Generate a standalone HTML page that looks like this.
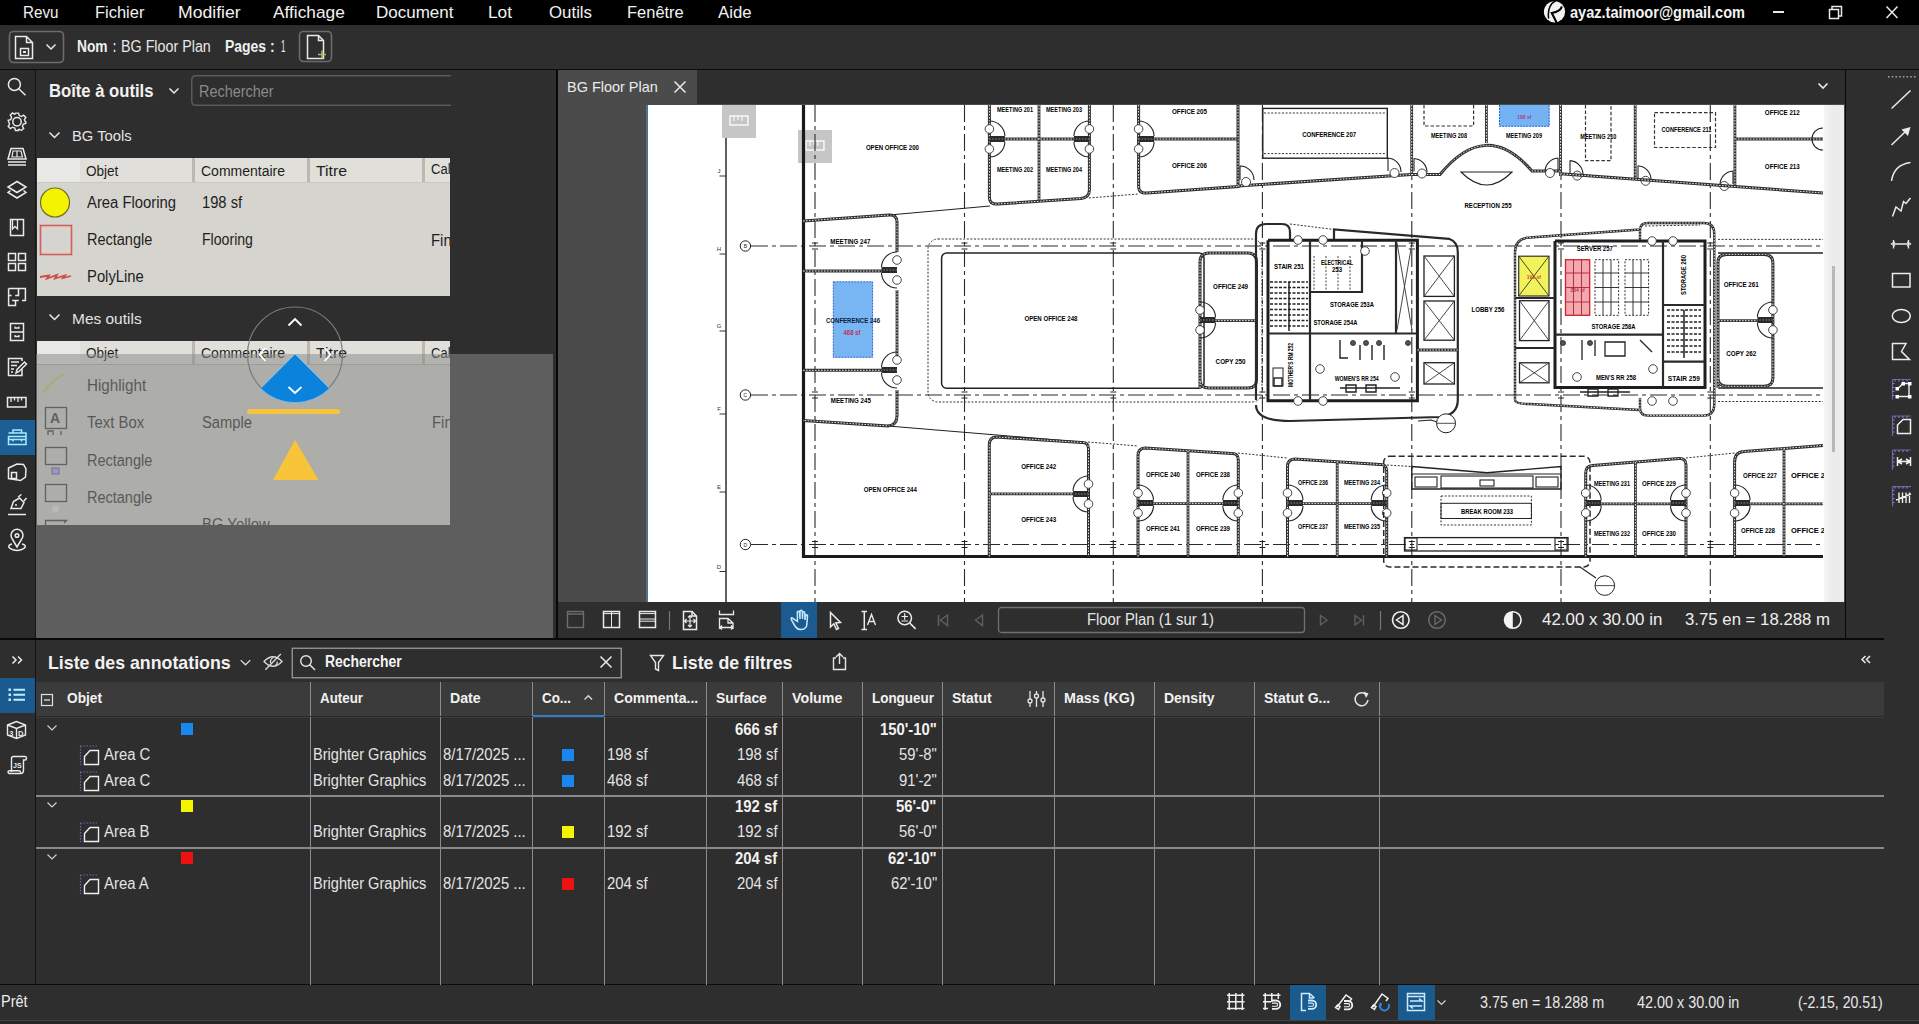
<!DOCTYPE html><html><head><meta charset="utf-8"><style>
html,body{margin:0;padding:0;width:1919px;height:1024px;overflow:hidden;background:#2e2e2e;font-family:"Liberation Sans",sans-serif;}
body>div,body>svg{position:absolute;}
svg text{font-family:"Liberation Sans",sans-serif;}
</style></head><body>
<div style="left:0px;top:0px;width:1919px;height:25px;background:#000;"></div>
<div style="left:0px;top:25px;width:1919px;height:44px;background:#2e2e2e;"></div>
<div style="left:0px;top:69px;width:1919px;height:1px;background:#0b0b0b;"></div>
<div style="left:0px;top:70px;width:35px;height:568px;background:#2b2b2b;"></div>
<div style="left:35px;top:70px;width:1px;height:568px;background:#161616;"></div>
<div style="left:36px;top:70px;width:520px;height:568px;background:#2e2e2e;"></div>
<div style="left:556px;top:70px;width:2px;height:570px;background:#080808;"></div>
<div style="left:558px;top:70px;width:1287px;height:34px;background:#2e2e2e;"></div>
<div style="left:558px;top:70px;width:139px;height:35px;background:#4b4b4b;"></div>
<div style="left:558px;top:104px;width:1287px;height:498px;background:#4b4b4b;"></div>
<div style="left:646px;top:105px;width:2px;height:497px;background:#52728c;"></div>
<div style="left:648px;top:105px;width:1176px;height:497px;background:#ffffff;"></div>
<div style="left:1824px;top:105px;width:20px;height:497px;background:linear-gradient(90deg,#f6f6f6,#ececec 40%,#ececec);"></div>
<div style="left:1845px;top:70px;width:1px;height:570px;background:#080808;"></div>
<div style="left:558px;top:602px;width:1287px;height:36px;background:#2e2e2e;"></div>
<div style="left:1846px;top:70px;width:73px;height:915px;background:#2e2e2e;"></div>
<div style="left:0px;top:640px;width:1884px;height:345px;background:#2e2e2e;"></div>
<div style="left:0px;top:638px;width:1884px;height:2px;background:#080808;"></div>
<div style="left:35px;top:640px;width:1px;height:345px;background:#141414;"></div>
<div style="left:0px;top:984px;width:1919px;height:1px;background:#0b0b0b;"></div>
<div style="left:0px;top:985px;width:1919px;height:35px;background:#2e2e2e;"></div>
<div style="left:0px;top:1020px;width:1919px;height:1px;background:#444;"></div>
<div style="left:0px;top:1021px;width:1919px;height:3px;background:#262626;"></div>
<div style="left:23.30px;top:4px;font-size:17px;line-height:17px;color:#f2f2f2;white-space:nowrap;transform:scaleX(0.8931);transform-origin:0 0;">Revu</div>
<div style="left:95.40px;top:4px;font-size:17px;line-height:17px;color:#f2f2f2;white-space:nowrap;transform:scaleX(0.9686);transform-origin:0 0;">Fichier</div>
<div style="left:178.00px;top:4px;font-size:17px;line-height:17px;color:#f2f2f2;white-space:nowrap;transform:scaleX(1.0358);transform-origin:0 0;">Modifier</div>
<div style="left:273.00px;top:4px;font-size:17px;line-height:17px;color:#f2f2f2;white-space:nowrap;transform:scaleX(1.0177);transform-origin:0 0;">Affichage</div>
<div style="left:376.00px;top:4px;font-size:17px;line-height:17px;color:#f2f2f2;white-space:nowrap;">Document</div>
<div style="left:488.30px;top:4px;font-size:17px;line-height:17px;color:#f2f2f2;white-space:nowrap;transform:scaleX(1.0157);transform-origin:0 0;">Lot</div>
<div style="left:549.00px;top:4px;font-size:17px;line-height:17px;color:#f2f2f2;white-space:nowrap;transform:scaleX(0.9900);transform-origin:0 0;">Outils</div>
<div style="left:627.00px;top:4px;font-size:17px;line-height:17px;color:#f2f2f2;white-space:nowrap;transform:scaleX(0.9690);transform-origin:0 0;">Fenêtre</div>
<div style="left:718.00px;top:4px;font-size:17px;line-height:17px;color:#f2f2f2;white-space:nowrap;transform:scaleX(0.9853);transform-origin:0 0;">Aide</div>
<div style="left:1569.90px;top:4px;font-size:17px;line-height:17px;font-weight:bold;color:#f4f4f4;white-space:nowrap;transform:scaleX(0.8553);transform-origin:0 0;">ayaz.taimoor@gmail.com</div>
<svg style="left:1540px;top:0px;" width="30" height="25" viewBox="0 0 30 25"><circle cx="14.5" cy="11.8" r="10.6" fill="#f2f2f2"/><path d="M15.8 0.5 C10.5 3.5 7.5 10 8.6 18.5" stroke="#000" stroke-width="1.5" fill="none"/><path d="M21.8 6.5 C21 10.5 16 12.3 11.8 13 L16.8 23" stroke="#000" stroke-width="2.1" fill="none"/></svg>
<div style="left:1773px;top:11px;width:11px;height:1.5px;background:#eaeaea;"></div>
<svg style="left:1826px;top:4px;" width="20" height="18" viewBox="0 0 20 18"><rect x="3.5" y="5.5" width="9" height="9" stroke="#eaeaea" stroke-width="1.5" fill="none"/><path d="M6 5.5 V2.5 H15.5 V12 H12.5" stroke="#eaeaea" stroke-width="1.5" fill="none"/></svg>
<svg style="left:1884px;top:3px;" width="16" height="18" viewBox="0 0 16 18"><path d="M2.5 3.5 L13.5 15 M13.5 3.5 L2.5 15" stroke="#eaeaea" stroke-width="1.5" fill="none"/></svg>
<svg style="left:8px;top:30px;" width="58" height="34" viewBox="0 0 58 34"><rect x="1.5" y="1.5" width="54" height="31" rx="4" stroke="#6c6c6c" stroke-width="1.6" fill="none"/><path d="M7.5 6.5 H18.5 L24.5 12.5 V28.5 H7.5 Z M18.5 6.5 V12.5 H24.5" stroke="#eaeaea" stroke-width="1.5" fill="none"/><rect x="12.5" y="18.5" width="8" height="7" stroke="#eaeaea" stroke-width="1.5" fill="none"/><rect x="15" y="21" width="3" height="2" fill="#eaeaea"/><path d="M38.5 14.5 L43 19 L47.5 14.5" stroke="#eaeaea" stroke-width="1.5" fill="none"/></svg>
<div style="left:76.80px;top:39px;font-size:16px;line-height:16px;font-weight:bold;color:#f0f0f0;white-space:nowrap;transform:scaleX(0.8615);transform-origin:0 0;">Nom</div>
<div style="left:112.50px;top:39px;font-size:16px;line-height:16px;font-weight:bold;color:#f0f0f0;white-space:nowrap;transform:scaleX(0.5597);transform-origin:0 0;">:</div>
<div style="left:120.50px;top:39px;font-size:16px;line-height:16px;color:#e8e8e8;white-space:nowrap;transform:scaleX(0.8937);transform-origin:0 0;">BG Floor Plan</div>
<div style="left:224.90px;top:39px;font-size:16px;line-height:16px;font-weight:bold;color:#f0f0f0;white-space:nowrap;transform:scaleX(0.8720);transform-origin:0 0;">Pages :</div>
<div style="left:281.00px;top:39px;font-size:16px;line-height:16px;color:#e8e8e8;white-space:nowrap;transform:scaleX(0.4955);transform-origin:0 0;">1</div>
<svg style="left:298px;top:30px;" width="35" height="34" viewBox="0 0 35 34"><rect x="1.5" y="1.5" width="32" height="30" rx="4" stroke="#6c6c6c" stroke-width="1.6" fill="none"/><path d="M9.5 5.5 H20.5 L25.5 10.5 V28.5 H9.5 Z M20.5 5.5 V10.5 H25.5" stroke="#eaeaea" stroke-width="1.5" fill="none"/><path d="M20 24.5 H28 M24 20.5 V28.5" stroke="#a8c060" stroke-width="1.5"/></svg>
<svg style="left:0px;top:70px;" width="35" height="500" viewBox="0 0 35 500"><circle cx="14.4" cy="14.4" r="6" stroke="#eaeaea" stroke-width="1.5" fill="none"/><path d="M18.8 18.8 L25.5 25.3" stroke="#eaeaea" stroke-width="1.5" fill="none"/><g transform="translate(17,51.8)"><circle r="4.2" stroke="#eaeaea" stroke-width="1.5" fill="none"/><path d="M-1.6 -8.7 L1.6 -8.7 L2.2 -6.2 L4.4 -5.3 L6.6 -6.6 L8.8 -4.4 L7.4 -2.2 L8.2 -0.1 L8.8 0 L8.8 1.6 L6.3 2.2 L5.4 4.3 L6.7 6.5 L4.5 8.7 L2.2 7.4 L1.6 7.6 L1.6 8.7 L-1.6 8.7 L-2.2 6.3 L-4.4 5.4 L-6.6 6.7 L-8.8 4.5 L-7.4 2.3 L-8.3 0.1 L-8.8 -1.6 L-6.3 -2.2 L-5.4 -4.4 L-6.7 -6.6 L-4.5 -8.8 L-2.3 -7.5 Z" stroke="#eaeaea" stroke-width="1.4" fill="none"/></g><path d="M11 78.5 H23 L26 89 H8 Z" stroke="#eaeaea" stroke-width="1.5" fill="none"/><path d="M13 81 H17 V87 H12 Z M17 81 H21 L22.5 87 H17" stroke="#eaeaea" stroke-width="1.2" fill="none"/><path d="M8 92 H26 M8 95 H26" stroke="#eaeaea" stroke-width="1.5" fill="none"/><path d="M17 111.5 L26 117 L17 122.5 L8 117 Z" stroke="#eaeaea" stroke-width="1.5" fill="none"/><path d="M10.5 120.5 L8 122.5 L17 128 L26 122.5 L23.5 120.5" stroke="#eaeaea" stroke-width="1.5" fill="none"/><rect x="10.5" y="149.5" width="13" height="16" stroke="#eaeaea" stroke-width="1.5" fill="none"/><path d="M12.5 149.5 V159 L15 156.5 L17.5 159 V149.5" stroke="#eaeaea" stroke-width="1.3" fill="none"/><rect x="8.5" y="183.5" width="7" height="7" stroke="#eaeaea" stroke-width="1.5" fill="none"/><rect x="18.5" y="183.5" width="7" height="7" stroke="#eaeaea" stroke-width="1.5" fill="none"/><rect x="8.5" y="193.5" width="7" height="7" stroke="#eaeaea" stroke-width="1.5" fill="none"/><rect x="18.5" y="193.5" width="7" height="7" stroke="#eaeaea" stroke-width="1.5" fill="none"/><path d="M8.6 218.6 H25.4 V230.4 H22 M18.7 230.4 H12.1 M15.5 230.4 V235.4 H8.6 V218.6 M18.5 218.6 V225.4 H15.2 M11.6 225.4 H8.6" stroke="#eaeaea" stroke-width="1.5" fill="none"/><rect x="10.5" y="253.5" width="13" height="17" stroke="#eaeaea" stroke-width="1.5" fill="none"/><path d="M10.5 262 H23.5 M15 256.5 V258 H19 V256.5 M15 265 V266.5 H19 V265" stroke="#eaeaea" stroke-width="1.3" fill="none"/><path d="M22 299 V305.5 H8.5 V288.5 H22 V291" stroke="#eaeaea" stroke-width="1.5" fill="none"/><path d="M11 292 H19 M11 295.5 H17 M11 299 H14 M11 302 H13" stroke="#eaeaea" stroke-width="1.3"/><path d="M16 303 L17 299.5 L24.5 292 L26.5 294 L19 301.5 Z" stroke="#eaeaea" stroke-width="1.5" fill="none"/><rect x="7.5" y="327.5" width="18.5" height="9.5" stroke="#eaeaea" stroke-width="1.5" fill="none"/><path d="M11 327.5 V332 M14.5 327.5 V330.5 M18 327.5 V332 M21.5 327.5 V330.5" stroke="#eaeaea" stroke-width="1.3"/></svg>
<div style="left:0px;top:420px;width:35px;height:35px;background:#1c5e96;"></div>
<svg style="left:0px;top:420px;" width="35" height="35" viewBox="0 0 35 35"><path d="M8.5 16.5 H26 V24.5 H8.5 Z M8.5 19.5 H26 M13 13 V10 H21.5 V13 M8.5 13 H26 V16.5" stroke="#a6ecff" stroke-width="1.5" fill="none"/><path d="M13 19.5 V21.5 M21.5 19.5 V21.5" stroke="#a6ecff" stroke-width="1.5"/></svg>
<svg style="left:0px;top:455px;" width="35" height="100" viewBox="0 0 35 100"><path d="M8.5 13 L17 9 L23.5 9.5 L26 14 L25.5 22 L20.5 25.5 L8.5 23.5 Z" stroke="#eaeaea" stroke-width="1.5" fill="none"/><rect x="11.5" y="17.5" width="5" height="6" stroke="#eaeaea" stroke-width="1.5" fill="none"/><path d="M11 53.5 L13.5 46.5 L19.5 43 L24 47.5 L21 53.5 Z" stroke="#eaeaea" stroke-width="1.5" fill="none"/><path d="M18 42 L21.5 39.5 M24 46 L26.5 43" stroke="#eaeaea" stroke-width="1.5" fill="none"/><circle cx="16" cy="50" r="1" fill="#eaeaea"/><path d="M8 59.5 H26" stroke="#eaeaea" stroke-width="1.5" fill="none"/><path d="M17 92 L12.3 84 A6 6 0 1 1 21.7 84 Z" stroke="#eaeaea" stroke-width="1.5" fill="none"/><circle cx="17" cy="80.5" r="1.8" stroke="#eaeaea" stroke-width="1.5" fill="none"/><path d="M12 89 C7 90 7 94 17 95.5 C27 94 27 90 22 89" stroke="#eaeaea" stroke-width="1.5" fill="none"/></svg>
<div style="left:49.00px;top:82px;font-size:18px;line-height:18px;font-weight:bold;color:#f2f2f2;white-space:nowrap;transform:scaleX(0.9245);transform-origin:0 0;">Boîte à outils</div>
<svg style="left:165px;top:84px;" width="18" height="14" viewBox="0 0 18 14"><path d="M4.5 4.5 L9 9 L13.5 4.5" stroke="#eaeaea" stroke-width="1.5" fill="none"/></svg>
<svg style="left:191px;top:75px;" width="270" height="32" viewBox="0 0 270 32"><path d="M260 0.75 H5 Q0.75 0.75 0.75 5 V26 Q0.75 30.25 5 30.25 H260" stroke="#5a5a5a" stroke-width="1.5" fill="none"/></svg>
<div style="left:199.00px;top:83.5px;font-size:16px;line-height:16px;color:#8a8a8a;white-space:nowrap;transform:scaleX(0.9018);transform-origin:0 0;">Rechercher</div>
<svg style="left:45px;top:128px;" width="18" height="14" viewBox="0 0 18 14"><path d="M4.5 4.5 L9.5 9.5 L14.5 4.5" stroke="#eaeaea" stroke-width="1.5" fill="none"/></svg>
<div style="left:72.30px;top:127.9px;font-size:15px;line-height:15px;color:#e4e4e4;white-space:nowrap;transform:scaleX(0.9851);transform-origin:0 0;">BG Tools</div>
<div style="left:37px;top:158px;width:413px;height:138px;background:#d5d4ce;"></div>
<div style="left:37px;top:158px;width:413px;height:25px;background:#e0dfd9;"></div>
<div style="left:37px;top:158px;width:43px;height:25px;background:#e8e8e4;"></div>
<div style="left:192px;top:158px;width:3px;height:25px;background:#b9b8b2;"></div>
<div style="left:306.5px;top:158px;width:3px;height:25px;background:#b9b8b2;"></div>
<div style="left:421.5px;top:158px;width:3px;height:25px;background:#b9b8b2;"></div>
<div style="left:37px;top:182px;width:413px;height:1px;background:#c9c8c2;"></div>
<div style="left:86.25px;top:164px;font-size:14px;line-height:14px;color:#1e1e1e;white-space:nowrap;transform:scaleX(0.9668);transform-origin:0 0;">Objet</div>
<div style="left:201.00px;top:164px;font-size:14px;line-height:14px;color:#1e1e1e;white-space:nowrap;">Commentaire</div>
<div style="left:316.00px;top:164px;font-size:14px;line-height:14px;color:#1e1e1e;white-space:nowrap;transform:scaleX(1.1269);transform-origin:0 0;">Titre</div>
<div style="left:37px;top:158px;width:413px;height:138px;overflow:hidden"><div style="position:absolute;left:394px;top:4px;font-size:14px;line-height:14px;color:#1e1e1e;transform:scaleX(0.93);transform-origin:0 0">Cal</div><div style="position:absolute;left:394px;top:75px;font-size:16px;line-height:16px;color:#1e1e1e;transform:scaleX(0.93);transform-origin:0 0">Fin</div></div>
<div style="left:87.30px;top:194.6px;font-size:16px;line-height:16px;color:#1e1e1e;white-space:nowrap;transform:scaleX(0.9274);transform-origin:0 0;">Area Flooring</div>
<div style="left:202.30px;top:194.6px;font-size:16px;line-height:16px;color:#1e1e1e;white-space:nowrap;transform:scaleX(0.9197);transform-origin:0 0;">198 sf</div>
<div style="left:87.00px;top:232.4px;font-size:16px;line-height:16px;color:#1e1e1e;white-space:nowrap;transform:scaleX(0.9059);transform-origin:0 0;">Rectangle</div>
<div style="left:202.00px;top:232.4px;font-size:16px;line-height:16px;color:#1e1e1e;white-space:nowrap;transform:scaleX(0.8817);transform-origin:0 0;">Flooring</div>
<div style="left:86.90px;top:269.4px;font-size:16px;line-height:16px;color:#1e1e1e;white-space:nowrap;transform:scaleX(0.9257);transform-origin:0 0;">PolyLine</div>
<svg style="left:37px;top:183px;" width="40" height="112" viewBox="0 0 40 112"><circle cx="18" cy="19.5" r="14.5" fill="#f4f400" stroke="#6d6d2a" stroke-width="1.2"/><rect x="3.5" y="42.5" width="31" height="29" fill="none" stroke="#d65b5b" stroke-width="1.6"/><path d="M3 94 L12 92.5 L10 95.5 L20 92 L18 95.5 L28 92.5 L26 95 L34 93" fill="none" stroke="#d24a4a" stroke-width="1.8"/></svg>
<svg style="left:45px;top:310px;" width="18" height="14" viewBox="0 0 18 14"><path d="M4.5 4.5 L9.5 9.5 L14.5 4.5" stroke="#eaeaea" stroke-width="1.5" fill="none"/></svg>
<div style="left:72.40px;top:310.5px;font-size:15px;line-height:15px;color:#e4e4e4;white-space:nowrap;transform:scaleX(1.0311);transform-origin:0 0;">Mes outils</div>
<div style="left:37px;top:341px;width:413px;height:184px;background:#d5d4ce;"></div>
<div style="left:37px;top:341px;width:413px;height:24px;background:#e0dfd9;"></div>
<div style="left:37px;top:341px;width:43px;height:24px;background:#e8e8e4;"></div>
<div style="left:192px;top:341px;width:3px;height:24px;background:#b9b8b2;"></div>
<div style="left:306.5px;top:341px;width:3px;height:24px;background:#b9b8b2;"></div>
<div style="left:421.5px;top:341px;width:3px;height:24px;background:#b9b8b2;"></div>
<div style="left:37px;top:364px;width:413px;height:1px;background:#b0afa9;"></div>
<div style="left:86.00px;top:346.2px;font-size:14px;line-height:14px;color:#1e1e1e;white-space:nowrap;transform:scaleX(0.9653);transform-origin:0 0;">Objet</div>
<div style="left:201.00px;top:346.2px;font-size:14px;line-height:14px;color:#1e1e1e;white-space:nowrap;">Commentaire</div>
<div style="left:316.00px;top:346.2px;font-size:14px;line-height:14px;color:#1e1e1e;white-space:nowrap;transform:scaleX(1.1269);transform-origin:0 0;">Titre</div>
<div style="left:37px;top:341px;width:413px;height:184px;overflow:hidden"><div style="position:absolute;left:394px;top:5px;font-size:14px;line-height:14px;color:#1e1e1e;transform:scaleX(0.93);transform-origin:0 0">Cal</div><div style="position:absolute;left:394.5px;top:74px;font-size:16px;line-height:16px;color:#1e1e1e;transform:scaleX(0.93);transform-origin:0 0">Fin</div><div style="position:absolute;left:165px;top:176px;font-size:16px;line-height:16px;color:#1e1e1e;transform:scaleX(0.93);transform-origin:0 0">BG Yellow</div></div>
<div style="left:86.90px;top:378px;font-size:16px;line-height:16px;color:#1e1e1e;white-space:nowrap;transform:scaleX(0.9496);transform-origin:0 0;">Highlight</div>
<div style="left:86.90px;top:415px;font-size:16px;line-height:16px;color:#1e1e1e;white-space:nowrap;transform:scaleX(0.9306);transform-origin:0 0;">Text Box</div>
<div style="left:202.00px;top:415px;font-size:16px;line-height:16px;color:#1e1e1e;white-space:nowrap;transform:scaleX(0.9218);transform-origin:0 0;">Sample</div>
<div style="left:87.00px;top:452.6px;font-size:16px;line-height:16px;color:#1e1e1e;white-space:nowrap;transform:scaleX(0.9059);transform-origin:0 0;">Rectangle</div>
<div style="left:87.00px;top:489.6px;font-size:16px;line-height:16px;color:#1e1e1e;white-space:nowrap;transform:scaleX(0.9059);transform-origin:0 0;">Rectangle</div>
<svg style="left:37px;top:365px;" width="40" height="160" viewBox="0 0 40 160"><path d="M6 28 Q14 16 27 9" stroke="#c9d36a" stroke-width="2.2" fill="none"/><rect x="8.5" y="42.5" width="21" height="21" fill="none" stroke="#333" stroke-width="1.3"/><text x="13" y="58" font-size="14" font-weight="bold" fill="#333">A</text><path d="M11 70 V66 H16 V70 M24 66 V70" stroke="#333" stroke-width="1.3" fill="none"/><rect x="8.5" y="82.5" width="21" height="17" fill="none" stroke="#333" stroke-width="1.3"/><rect x="15" y="103" width="7" height="6" fill="#b6a3f0" stroke="#6e5bd0" stroke-width="1.2"/><rect x="8.5" y="119.5" width="21" height="17" fill="none" stroke="#333" stroke-width="1.3"/><circle cx="18.5" cy="144" r="3.5" fill="#eeeeea"/><path d="M8.5 160 V155.5 H29.5 L27 158" fill="none" stroke="#333" stroke-width="1.3"/></svg>
<div style="left:36px;top:354px;width:517px;height:284px;background:rgba(137,137,137,0.53);"></div>
<svg style="left:240px;top:300px;" width="110" height="190" viewBox="0 0 110 190"><circle cx="55" cy="54.5" r="47.5" fill="none" stroke="#7a7a7a" stroke-width="1.2"/><path d="M55 54 L20.5 88.5 A49 49 0 0 0 89.5 88.5 Z" fill="#0b82dc" stroke="#8fc4ee" stroke-width="0.8"/><path d="M48.5 87 L55 93 L61.5 87" stroke="#fff" stroke-width="1.8" fill="none"/><path d="M48.5 25.5 L55 19 L61.5 25.5" stroke="#fff" stroke-width="1.8" fill="none"/><path d="M25.5 48 L19.5 54.5 L25.5 61" stroke="#fff" stroke-width="1.8" fill="none"/><path d="M84.5 48 L90.5 54.5 L84.5 61" stroke="#fff" stroke-width="1.8" fill="none"/><rect x="7" y="109" width="93" height="5" rx="2.5" fill="#f7c440"/><path d="M55 140 L78.5 180 L33 180 Z" fill="#f8c43a"/></svg>
<div style="left:567.00px;top:78.5px;font-size:15px;line-height:15px;color:#ececec;white-space:nowrap;transform:scaleX(0.9639);transform-origin:0 0;">BG Floor Plan</div>
<svg style="left:670px;top:78px;" width="20" height="18" viewBox="0 0 20 18"><path d="M4.5 3.5 L15.5 14.5 M15.5 3.5 L4.5 14.5" stroke="#eaeaea" stroke-width="1.5" fill="none"/></svg>
<svg style="left:1814px;top:80px;" width="18" height="12" viewBox="0 0 18 12"><path d="M4.5 3.5 L9 8 L13.5 3.5" stroke="#eaeaea" stroke-width="1.6" fill="none"/></svg>
<svg style="left:558px;top:602px;" width="380" height="35" viewBox="0 0 380 35"><rect x="9.5" y="9.5" width="16" height="16" stroke="#6e6e6e" stroke-width="1.4" fill="none"/><path d="M9.5 12 H25.5" stroke="#6e6e6e" stroke-width="1.4" fill="none"/><rect x="45.5" y="9.5" width="16" height="16" stroke="#eaeaea" stroke-width="1.5" fill="none"/><path d="M53.5 9.5 V25.5 M45.5 11.6 H61.5" stroke="#eaeaea" stroke-width="1"/><rect x="81.5" y="9.5" width="16" height="16" stroke="#eaeaea" stroke-width="1.5" fill="none"/><path d="M81.5 11.6 H97.5 M81.5 17 H97.5 M81.5 19.2 H97.5" stroke="#eaeaea" stroke-width="1"/><path d="M111.5 9 V28" stroke="#777" stroke-width="1.2"/><path d="M125.5 9.5 H134 L138.5 14 V27.5 H125.5 Z M134 9.5 V14 H138.5" stroke="#eaeaea" stroke-width="1.5" fill="none"/><path d="M126.5 19 H137.5 M132 13.5 V25 M128.5 17 L126.5 19 L128.5 21 M135.5 17 L137.5 19 L135.5 21 M130 15.5 L132 13.5 L134 15.5 M130 23 L132 25 L134 23" stroke="#eaeaea" stroke-width="1.2" fill="none"/><path d="M161.5 8.5 V12.5 H175.5 V8.5 M161.5 27 V16.5 H170 L175 21 V27 M170 16.5 V21 H175 M162 25.5 H175 M164 23.5 L162 25.5 L164 27.5 M173 23.5 L175 25.5 L173 27.5" stroke="#eaeaea" stroke-width="1.3" fill="none"/></svg>
<div style="left:781px;top:602px;width:36px;height:36px;background:#1b5b90;"></div>
<svg style="left:781px;top:602px;" width="36" height="35" viewBox="0 0 36 35"><path d="M12.5 17 C11 15 9.5 15.5 10.5 18 L14 24 C15.5 26.5 17 27.5 20 27.5 C24 27.5 26 25 26 21 L26.5 14 C26.7 12.5 24.8 12.3 24.5 14 L24 18 L23.8 11 C23.7 9.3 21.7 9.3 21.7 11 L21.5 17 L21.3 9.5 C21.2 7.8 19 7.8 19 9.5 L19 17 L18.5 10.5 C18.4 8.8 16.3 8.8 16.3 10.5 L16.5 19.5 Z" stroke="#c4eaff" stroke-width="1.5" fill="none"/></svg>
<svg style="left:820px;top:602px;" width="120" height="35" viewBox="0 0 120 35"><path d="M10.5 10.5 L10.5 25 L13.8 21.8 L16.5 27.5 L18.5 26.5 L15.8 21 L20.5 20.5 Z" stroke="#eaeaea" stroke-width="1.5" fill="none"/><path d="M41.5 9.5 H47 M41.5 27.5 H47 M44.3 9.5 V27.5" stroke="#eaeaea" stroke-width="1.5" fill="none"/><path d="M47.5 23 L51.5 12.5 L55.5 23 M49 19.5 H54" stroke="#eaeaea" stroke-width="1.4" fill="none"/><circle cx="84.7" cy="16" r="6.8" stroke="#eaeaea" stroke-width="1.5" fill="none"/><path d="M89.7 21 L95.6 26.9" stroke="#eaeaea" stroke-width="1.7"/><path d="M81.5 14.5 H88 M84.7 11.3 V17.7 M81.5 19 H88" stroke="#eaeaea" stroke-width="1.2"/><path d="M118.5 13 V23.5" stroke="#5f5f5f" stroke-width="1.4"/></svg>
<svg style="left:930px;top:602px;" width="70" height="35" viewBox="0 0 70 35"><path d="M8.5 13 V23.5 M17.5 13 L10.5 18.2 L17.5 23.5 Z" stroke="#5f5f5f" stroke-width="1.4" fill="none"/><path d="M52.5 13 L45.5 18.2 L52.5 23.5 Z" stroke="#5f5f5f" stroke-width="1.4" fill="none"/></svg>
<svg style="left:997px;top:606px;" width="310" height="28" viewBox="0 0 310 28"><rect x="1.5" y="1.5" width="306" height="25" rx="3" stroke="#707070" stroke-width="1.3" fill="none"/></svg>
<div style="left:1087.00px;top:611.5px;font-size:16px;line-height:16px;color:#e6e6e6;white-space:nowrap;transform:scaleX(0.9273);transform-origin:0 0;">Floor Plan (1 sur 1)</div>
<svg style="left:1310px;top:602px;" width="200" height="35" viewBox="0 0 200 35"><path d="M10.5 13.5 L17 18.3 L10.5 23 Z" stroke="#5f5f5f" stroke-width="1.4" fill="none"/><path d="M45 13.5 L51.5 18.3 L45 23 Z M53.5 13 V23.5" stroke="#5f5f5f" stroke-width="1.4" fill="none"/><path d="M70.5 9 V28" stroke="#777" stroke-width="1.2"/><circle cx="90.8" cy="18" r="8.3" stroke="#f0f0f0" stroke-width="1.6" fill="none"/><path d="M93 13.5 L86.5 18 L93 22.5 Z" stroke="#f0f0f0" stroke-width="1.5" fill="none"/><circle cx="127" cy="18" r="8.3" stroke="#6a6a6a" stroke-width="1.5" fill="none"/><path d="M125 13.5 L131.5 18 L125 22.5 Z" stroke="#6a6a6a" stroke-width="1.4" fill="none"/></svg>
<svg style="left:1500px;top:602px;" width="26" height="35" viewBox="0 0 26 35"><circle cx="12.8" cy="18" r="8.3" stroke="#f4f4f4" stroke-width="1.6" fill="none"/><path d="M12.8 9.7 A8.3 8.3 0 0 0 12.8 26.3 Z" fill="#f4f4f4"/></svg>
<div style="left:1541.50px;top:611px;font-size:17px;line-height:17px;color:#eeeeee;white-space:nowrap;transform:scaleX(0.9946);transform-origin:0 0;">42.00 x 30.00 in</div>
<div style="left:1685.00px;top:611px;font-size:17px;line-height:17px;color:#eeeeee;white-space:nowrap;transform:scaleX(0.9866);transform-origin:0 0;">3.75 en = 18.288 m</div>
<svg style="left:0;top:0" width="1919" height="1024" viewBox="0 0 1919 1024"><rect x="1888.0" y="76" width="1.6" height="1.6" fill="#9a9a9a"/><rect x="1891.7" y="76" width="1.6" height="1.6" fill="#9a9a9a"/><rect x="1895.4" y="76" width="1.6" height="1.6" fill="#9a9a9a"/><rect x="1899.1" y="76" width="1.6" height="1.6" fill="#9a9a9a"/><rect x="1902.8" y="76" width="1.6" height="1.6" fill="#9a9a9a"/><rect x="1906.5" y="76" width="1.6" height="1.6" fill="#9a9a9a"/><rect x="1910.2" y="76" width="1.6" height="1.6" fill="#9a9a9a"/><rect x="1913.9" y="76" width="1.6" height="1.6" fill="#9a9a9a"/><path d="M1891.5 108.5 L1910.5 90.5" stroke="#ebebeb" stroke-width="1.5" fill="none"/><path d="M1891.5 145 L1906 131" stroke="#ebebeb" stroke-width="1.5" fill="none"/><path d="M1910.5 127 L1901.5 129.5 L1908 136 Z" fill="#ebebeb"/><path d="M1891.5 181 C1893 170 1900 164 1910.5 162.5" stroke="#ebebeb" stroke-width="1.5" fill="none"/><path d="M1892.5 216.5 L1896 207 L1901 211 L1903.5 201.5 L1906 203.5 L1910.5 198" stroke="#ebebeb" stroke-width="1.5" fill="none"/><path d="M1893 244 H1909 M1893.5 240 V248.5 M1908.5 240 V248.5 M1891 244 L1895 242 M1891 244 L1895 246 M1911 244 L1907 242 M1911 244 L1907 246" stroke="#ebebeb" stroke-width="1.3" fill="none"/><rect x="1892.5" y="273.5" width="17.5" height="13.5" stroke="#ebebeb" stroke-width="1.5" fill="none"/><ellipse cx="1901.3" cy="316" rx="9" ry="6.5" stroke="#ebebeb" stroke-width="1.5" fill="none"/><path d="M1892.5 343.5 H1906 L1901.5 351.5 L1909.5 359.5 H1892.5 Z" stroke="#ebebeb" stroke-width="1.5" fill="none"/><path d="M1892.5 379.5 H1911 M1892.5 379.5 V399.5" stroke="#6a64b0" stroke-width="1.2" fill="none"/><path d="M1895 379.5 V381.5" stroke="#8a86c8" stroke-width="1"/><path d="M1899 379.5 V381.5" stroke="#8a86c8" stroke-width="1"/><path d="M1903 379.5 V381.5" stroke="#8a86c8" stroke-width="1"/><path d="M1907 379.5 V381.5" stroke="#8a86c8" stroke-width="1"/><path d="M1892.5 383.5 H1894.5" stroke="#8a86c8" stroke-width="1"/><path d="M1892.5 387.5 H1894.5" stroke="#8a86c8" stroke-width="1"/><path d="M1892.5 391.5 H1894.5" stroke="#8a86c8" stroke-width="1"/><path d="M1892.5 395.5 H1894.5" stroke="#8a86c8" stroke-width="1"/><path d="M1897.5 389 L1903 383.5 H1909 V396.5 H1897.5" stroke="#f0f0f0" stroke-width="1.4" fill="none"/><rect x="1895.5" y="387" width="3.5" height="3.5" fill="#fff"/><rect x="1901.5" y="382" width="3.5" height="3.5" fill="#fff"/><rect x="1908" y="382" width="3.5" height="3.5" fill="#fff"/><rect x="1908" y="395" width="3.5" height="3.5" fill="#fff"/><rect x="1895.5" y="395" width="3.5" height="3.5" fill="#fff"/><path d="M1892.5 416 H1911 M1892.5 416 V436" stroke="#6a64b0" stroke-width="1.2" fill="none"/><path d="M1895 416 V418" stroke="#8a86c8" stroke-width="1"/><path d="M1899 416 V418" stroke="#8a86c8" stroke-width="1"/><path d="M1903 416 V418" stroke="#8a86c8" stroke-width="1"/><path d="M1907 416 V418" stroke="#8a86c8" stroke-width="1"/><path d="M1892.5 420 H1894.5" stroke="#8a86c8" stroke-width="1"/><path d="M1892.5 424 H1894.5" stroke="#8a86c8" stroke-width="1"/><path d="M1892.5 428 H1894.5" stroke="#8a86c8" stroke-width="1"/><path d="M1892.5 432 H1894.5" stroke="#8a86c8" stroke-width="1"/><path d="M1897.5 433.5 V425 L1903 419.5 H1910.5 V433.5 Z" stroke="#f0f0f0" stroke-width="1.5" fill="none"/><path d="M1892.5 450 H1911 M1892.5 450 V470" stroke="#6a64b0" stroke-width="1.2" fill="none"/><path d="M1895 450 V452" stroke="#8a86c8" stroke-width="1"/><path d="M1899 450 V452" stroke="#8a86c8" stroke-width="1"/><path d="M1903 450 V452" stroke="#8a86c8" stroke-width="1"/><path d="M1907 450 V452" stroke="#8a86c8" stroke-width="1"/><path d="M1892.5 454 H1894.5" stroke="#8a86c8" stroke-width="1"/><path d="M1892.5 458 H1894.5" stroke="#8a86c8" stroke-width="1"/><path d="M1892.5 462 H1894.5" stroke="#8a86c8" stroke-width="1"/><path d="M1892.5 466 H1894.5" stroke="#8a86c8" stroke-width="1"/><path d="M1897.5 457 V466 M1910.5 457 V466 M1898 461.5 H1910 M1898 461.5 L1902 459 M1898 461.5 L1902 464 M1910 461.5 L1906 459 M1910 461.5 L1906 464" stroke="#f0f0f0" stroke-width="1.5" fill="none"/><path d="M1892.5 486.6 H1911 M1892.5 486.6 V506.6" stroke="#6a64b0" stroke-width="1.2" fill="none"/><path d="M1895 486.6 V488.6" stroke="#8a86c8" stroke-width="1"/><path d="M1899 486.6 V488.6" stroke="#8a86c8" stroke-width="1"/><path d="M1903 486.6 V488.6" stroke="#8a86c8" stroke-width="1"/><path d="M1907 486.6 V488.6" stroke="#8a86c8" stroke-width="1"/><path d="M1892.5 490.6 H1894.5" stroke="#8a86c8" stroke-width="1"/><path d="M1892.5 494.6 H1894.5" stroke="#8a86c8" stroke-width="1"/><path d="M1892.5 498.6 H1894.5" stroke="#8a86c8" stroke-width="1"/><path d="M1892.5 502.6 H1894.5" stroke="#8a86c8" stroke-width="1"/><path d="M1899 503 V492.5 M1902.5 503 V492.5 M1906 503 V492.5 M1909.5 503 V492.5 M1896 500 L1911 494" stroke="#f0f0f0" stroke-width="1.4" fill="none"/></svg>
<div style="left:1832px;top:266px;width:3px;height:186px;background:#b8b8b8;"></div>
<svg style="left:0px;top:645px;" width="35" height="140" viewBox="0 0 35 140"><path d="M12.5 11.5 L16 15 L12.5 18.5 M18 11.5 L21.5 15 L18 18.5" stroke="#eaeaea" stroke-width="1.5" fill="none"/></svg>
<div style="left:0px;top:678px;width:35px;height:35px;background:#1a5a8e;"></div>
<svg style="left:0px;top:678px;" width="35" height="35" viewBox="0 0 35 35"><rect x="8.5" y="10.5" width="2.5" height="2.5" fill="#b8f0ff"/><rect x="8.5" y="15.5" width="2.5" height="2.5" fill="#b8f0ff"/><rect x="8.5" y="20.5" width="2.5" height="2.5" fill="#b8f0ff"/><path d="M13.5 11.8 H25 M13.5 16.8 H25 M13.5 21.8 H25" stroke="#b8f0ff" stroke-width="2"/></svg>
<svg style="left:0px;top:715px;" width="35" height="70" viewBox="0 0 35 70"><path d="M7.5 10 L16.5 6.5 L25.5 10 V20 L16.5 23.5 L7.5 20 Z M7.5 10 L16.5 13.5 L25.5 10 M16.5 13.5 V23.5" stroke="#eaeaea" stroke-width="1.4" fill="none"/><text x="9.3" y="21" font-size="7.5" font-weight="bold" fill="#eaeaea">3</text><text x="18" y="21" font-size="7.5" font-weight="bold" fill="#eaeaea">D</text><path d="M11.5 57 V43.5 Q11.5 41.5 13.5 41.5 H25 Q26.5 41.5 26.5 43.5 Q26.5 45 25 45 H23.5 V55.5 Q23.5 58.5 20.5 58.5 H9.5 Q8 58.5 8 57 Q8 55.8 9.5 55.8 H19 Q20.5 55.8 20.5 57.5" stroke="#eaeaea" stroke-width="1.4" fill="none"/><text x="13" y="53" font-size="7" font-weight="bold" fill="#eaeaea">JS</text></svg>
<div style="left:48.30px;top:653.3px;font-size:19px;line-height:19px;font-weight:bold;color:#f2f2f2;white-space:nowrap;transform:scaleX(0.9354);transform-origin:0 0;">Liste des annotations</div>
<svg style="left:236px;top:654px;" width="20" height="16" viewBox="0 0 20 16"><path d="M4.7 6.1 L9.5 10.8 L14.3 6.1" stroke="#dcdcdc" stroke-width="1.3" fill="none"/></svg>
<svg style="left:260px;top:650px;" width="26" height="24" viewBox="0 0 26 24"><path d="M4 11.5 Q13 2 22 11.5 Q13 21 4 11.5 Z" stroke="#dcdcdc" stroke-width="1.3" fill="none"/><path d="M5.4 19.75 L20.8 4.1" stroke="#dcdcdc" stroke-width="1.4"/><path d="M10.5 13 Q10 9 13.5 7.5 M15.5 15.5 Q17.5 14 17.3 11.5" stroke="#dcdcdc" stroke-width="1.3" fill="none"/></svg>
<svg style="left:291px;top:647px;" width="332" height="32" viewBox="0 0 332 32"><rect x="1.25" y="1.25" width="329" height="29.5" stroke="#9a9a9a" stroke-width="1.3" fill="none"/><circle cx="15" cy="14" r="5.3" stroke="#e6e6e6" stroke-width="1.4" fill="none"/><path d="M18.8 17.8 L24 23" stroke="#e6e6e6" stroke-width="1.5"/><path d="M309.5 9.5 L320.5 20.5 M320.5 9.5 L309.5 20.5" stroke="#eaeaea" stroke-width="1.5"/></svg>
<div style="left:325.00px;top:654.3px;font-size:16px;line-height:16px;font-weight:bold;color:#f4f4f4;white-space:nowrap;transform:scaleX(0.8708);transform-origin:0 0;">Rechercher</div>
<svg style="left:645px;top:650px;" width="24" height="26" viewBox="0 0 24 26"><path d="M5.5 5.5 H18.5 L13.5 12.5 V20.5 L10.5 19 V12.5 Z" stroke="#e6e6e6" stroke-width="1.4" fill="none"/></svg>
<div style="left:671.50px;top:653.2px;font-size:19px;line-height:19px;font-weight:bold;color:#f2f2f2;white-space:nowrap;transform:scaleX(0.9346);transform-origin:0 0;">Liste de filtres</div>
<svg style="left:828px;top:648px;" width="22" height="26" viewBox="0 0 22 26"><path d="M8 10 H5.5 V21.5 H17.5 V10 H15 M11.5 16 V5.5 M8 9 L11.5 5.5 L15 9" stroke="#e6e6e6" stroke-width="1.4" fill="none"/></svg>
<svg style="left:1856px;top:650px;" width="20" height="20" viewBox="0 0 20 20"><path d="M9.5 6 L6 9.5 L9.5 13 M14 6 L10.5 9.5 L14 13" stroke="#eaeaea" stroke-width="1.5" fill="none"/></svg>
<div style="left:36px;top:682px;width:1848px;height:35.5px;background:#3b3b3b;"></div>
<div style="left:310px;top:682px;width:1px;height:303px;background:#8c8c8c;"></div>
<div style="left:440px;top:682px;width:1px;height:303px;background:#8c8c8c;"></div>
<div style="left:532px;top:682px;width:1px;height:303px;background:#8c8c8c;"></div>
<div style="left:604px;top:682px;width:1px;height:303px;background:#8c8c8c;"></div>
<div style="left:706px;top:682px;width:1px;height:303px;background:#8c8c8c;"></div>
<div style="left:782px;top:682px;width:1px;height:303px;background:#8c8c8c;"></div>
<div style="left:862px;top:682px;width:1px;height:303px;background:#8c8c8c;"></div>
<div style="left:942px;top:682px;width:1px;height:303px;background:#8c8c8c;"></div>
<div style="left:1054px;top:682px;width:1px;height:303px;background:#8c8c8c;"></div>
<div style="left:1154px;top:682px;width:1px;height:303px;background:#8c8c8c;"></div>
<div style="left:1254px;top:682px;width:1px;height:303px;background:#8c8c8c;"></div>
<div style="left:1379px;top:682px;width:1px;height:303px;background:#8c8c8c;"></div>
<div style="left:36px;top:716px;width:1848px;height:1px;background:#2a2a2a;"></div>
<div style="left:533px;top:715px;width:71px;height:2px;background:#2f7fc9;"></div>
<svg style="left:36px;top:682px;" width="30" height="35" viewBox="0 0 30 35"><rect x="5.5" y="12.5" width="11" height="11" stroke="#e0e0e0" stroke-width="1.2" fill="none"/><path d="M8 18 H14" stroke="#e0e0e0" stroke-width="1.3"/></svg>
<div style="left:67.00px;top:690px;font-size:15px;line-height:15px;font-weight:bold;color:#f2f2f2;white-space:nowrap;transform:scaleX(0.9132);transform-origin:0 0;">Objet</div>
<div style="left:320.00px;top:690px;font-size:15px;line-height:15px;font-weight:bold;color:#f2f2f2;white-space:nowrap;transform:scaleX(0.8903);transform-origin:0 0;">Auteur</div>
<div style="left:450.00px;top:690px;font-size:15px;line-height:15px;font-weight:bold;color:#f2f2f2;white-space:nowrap;transform:scaleX(0.9432);transform-origin:0 0;">Date</div>
<div style="left:541.70px;top:690px;font-size:15px;line-height:15px;font-weight:bold;color:#f2f2f2;white-space:nowrap;transform:scaleX(0.8930);transform-origin:0 0;">Co...</div>
<div style="left:614.20px;top:690px;font-size:15px;line-height:15px;font-weight:bold;color:#f2f2f2;white-space:nowrap;transform:scaleX(0.9356);transform-origin:0 0;">Commenta...</div>
<div style="left:716.00px;top:690px;font-size:15px;line-height:15px;font-weight:bold;color:#f2f2f2;white-space:nowrap;transform:scaleX(0.9228);transform-origin:0 0;">Surface</div>
<div style="left:792.40px;top:690px;font-size:15px;line-height:15px;font-weight:bold;color:#f2f2f2;white-space:nowrap;transform:scaleX(0.9492);transform-origin:0 0;">Volume</div>
<div style="left:871.90px;top:690px;font-size:15px;line-height:15px;font-weight:bold;color:#f2f2f2;white-space:nowrap;transform:scaleX(0.8952);transform-origin:0 0;">Longueur</div>
<div style="left:951.80px;top:690px;font-size:15px;line-height:15px;font-weight:bold;color:#f2f2f2;white-space:nowrap;transform:scaleX(0.9336);transform-origin:0 0;">Statut</div>
<div style="left:1064.00px;top:690px;font-size:15px;line-height:15px;font-weight:bold;color:#f2f2f2;white-space:nowrap;transform:scaleX(0.9532);transform-origin:0 0;">Mass (KG)</div>
<div style="left:1164.20px;top:690px;font-size:15px;line-height:15px;font-weight:bold;color:#f2f2f2;white-space:nowrap;transform:scaleX(0.9307);transform-origin:0 0;">Density</div>
<div style="left:1263.80px;top:690px;font-size:15px;line-height:15px;font-weight:bold;color:#f2f2f2;white-space:nowrap;transform:scaleX(0.9350);transform-origin:0 0;">Statut G...</div>
<svg style="left:580px;top:690px;" width="16" height="16" viewBox="0 0 16 16"><path d="M4.5 9.5 L8.3 5.7 L12.1 9.5" stroke="#dcdcdc" stroke-width="1.3" fill="none"/></svg>
<svg style="left:1024px;top:688px;" width="26" height="22" viewBox="0 0 26 22"><path d="M6 3 V19 M12.5 3 V19 M19 3 V19" stroke="#e6e6e6" stroke-width="1.3"/><circle cx="6" cy="13" r="2" fill="#3b3b3b" stroke="#e6e6e6" stroke-width="1.3"/><circle cx="12.5" cy="8" r="2" fill="#3b3b3b" stroke="#e6e6e6" stroke-width="1.3"/><circle cx="19" cy="12" r="2" fill="#3b3b3b" stroke="#e6e6e6" stroke-width="1.3"/></svg>
<svg style="left:1350px;top:688px;" width="24" height="22" viewBox="0 0 24 22"><path d="M16.5 7 A6.5 6.5 0 1 0 18 12" stroke="#e6e6e6" stroke-width="1.5" fill="none"/><path d="M13.5 3.5 L18.5 5.5 L16 10 Z" fill="#e6e6e6"/></svg>
<div style="left:36px;top:795px;width:1848px;height:2px;background:#8a8a8a;"></div>
<div style="left:36px;top:847px;width:1848px;height:2px;background:#8a8a8a;"></div>
<svg style="left:44px;top:721px;" width="16" height="14" viewBox="0 0 16 14"><path d="M3.5 4.5 L8 9 L12.5 4.5" stroke="#d0d0d0" stroke-width="1.2" fill="none"/></svg>
<div style="left:181px;top:723px;width:12px;height:12px;background:#1a86f0;"></div>
<div style="left:735.14px;top:722px;font-size:16px;line-height:16px;font-weight:bold;color:#f2f2f2;white-space:nowrap;transform:scaleX(0.9300);transform-origin:0 0;">666 sf</div>
<div style="left:879.88px;top:722px;font-size:16px;line-height:16px;font-weight:bold;color:#f2f2f2;white-space:nowrap;transform:scaleX(0.9300);transform-origin:0 0;">150'-10"</div>
<svg style="left:78px;top:742.5px;" width="24" height="24" viewBox="0 0 24 24"><path d="M2.5 3 H19 M2.5 3 V22" stroke="#6c66b6" stroke-width="1.2" stroke-dasharray="1.5 1.5"/><path d="M6.5 21.5 V13.5 L12 7.5 H20.5 V21.5 Z" stroke="#f0f0f0" stroke-width="1.4" fill="none"/></svg>
<div style="left:104.00px;top:746.5px;font-size:16px;line-height:16px;color:#e4e4e4;white-space:nowrap;transform:scaleX(0.9300);transform-origin:0 0;">Area C</div>
<div style="left:313.30px;top:746.5px;font-size:16px;line-height:16px;color:#e4e4e4;white-space:nowrap;transform:scaleX(0.9110);transform-origin:0 0;">Brighter Graphics</div>
<div style="left:443.30px;top:746.5px;font-size:16px;line-height:16px;color:#e4e4e4;white-space:nowrap;transform:scaleX(0.9296);transform-origin:0 0;">8/17/2025 ...</div>
<div style="left:562px;top:748.5px;width:12px;height:12px;background:#1a86f0;"></div>
<div style="left:607.00px;top:746.5px;font-size:16px;line-height:16px;color:#e4e4e4;white-space:nowrap;transform:scaleX(0.9300);transform-origin:0 0;">198 sf</div>
<div style="left:736.85px;top:746.5px;font-size:16px;line-height:16px;color:#e4e4e4;white-space:nowrap;transform:scaleX(0.9300);transform-origin:0 0;">198 sf</div>
<div style="left:898.86px;top:746.5px;font-size:16px;line-height:16px;color:#e4e4e4;white-space:nowrap;transform:scaleX(0.9300);transform-origin:0 0;">59'-8"</div>
<svg style="left:78px;top:768.5px;" width="24" height="24" viewBox="0 0 24 24"><path d="M2.5 3 H19 M2.5 3 V22" stroke="#6c66b6" stroke-width="1.2" stroke-dasharray="1.5 1.5"/><path d="M6.5 21.5 V13.5 L12 7.5 H20.5 V21.5 Z" stroke="#f0f0f0" stroke-width="1.4" fill="none"/></svg>
<div style="left:104.00px;top:772.5px;font-size:16px;line-height:16px;color:#e4e4e4;white-space:nowrap;transform:scaleX(0.9300);transform-origin:0 0;">Area C</div>
<div style="left:313.30px;top:772.5px;font-size:16px;line-height:16px;color:#e4e4e4;white-space:nowrap;transform:scaleX(0.9110);transform-origin:0 0;">Brighter Graphics</div>
<div style="left:443.30px;top:772.5px;font-size:16px;line-height:16px;color:#e4e4e4;white-space:nowrap;transform:scaleX(0.9296);transform-origin:0 0;">8/17/2025 ...</div>
<div style="left:562px;top:774.5px;width:12px;height:12px;background:#1a86f0;"></div>
<div style="left:607.00px;top:772.5px;font-size:16px;line-height:16px;color:#e4e4e4;white-space:nowrap;transform:scaleX(0.9300);transform-origin:0 0;">468 sf</div>
<div style="left:736.85px;top:772.5px;font-size:16px;line-height:16px;color:#e4e4e4;white-space:nowrap;transform:scaleX(0.9300);transform-origin:0 0;">468 sf</div>
<div style="left:898.86px;top:772.5px;font-size:16px;line-height:16px;color:#e4e4e4;white-space:nowrap;transform:scaleX(0.9300);transform-origin:0 0;">91'-2"</div>
<svg style="left:44px;top:798px;" width="16" height="14" viewBox="0 0 16 14"><path d="M3.5 4.5 L8 9 L12.5 4.5" stroke="#d0d0d0" stroke-width="1.2" fill="none"/></svg>
<div style="left:181px;top:800px;width:12px;height:12px;background:#f4f400;"></div>
<div style="left:735.14px;top:799px;font-size:16px;line-height:16px;font-weight:bold;color:#f2f2f2;white-space:nowrap;transform:scaleX(0.9300);transform-origin:0 0;">192 sf</div>
<div style="left:896.40px;top:799px;font-size:16px;line-height:16px;font-weight:bold;color:#f2f2f2;white-space:nowrap;transform:scaleX(0.9300);transform-origin:0 0;">56'-0"</div>
<svg style="left:78px;top:820px;" width="24" height="24" viewBox="0 0 24 24"><path d="M2.5 3 H19 M2.5 3 V22" stroke="#6c66b6" stroke-width="1.2" stroke-dasharray="1.5 1.5"/><path d="M6.5 21.5 V13.5 L12 7.5 H20.5 V21.5 Z" stroke="#f0f0f0" stroke-width="1.4" fill="none"/></svg>
<div style="left:104.00px;top:824px;font-size:16px;line-height:16px;color:#e4e4e4;white-space:nowrap;transform:scaleX(0.9300);transform-origin:0 0;">Area B</div>
<div style="left:313.30px;top:824px;font-size:16px;line-height:16px;color:#e4e4e4;white-space:nowrap;transform:scaleX(0.9110);transform-origin:0 0;">Brighter Graphics</div>
<div style="left:443.30px;top:824px;font-size:16px;line-height:16px;color:#e4e4e4;white-space:nowrap;transform:scaleX(0.9296);transform-origin:0 0;">8/17/2025 ...</div>
<div style="left:562px;top:826px;width:12px;height:12px;background:#f4f400;"></div>
<div style="left:607.00px;top:824px;font-size:16px;line-height:16px;color:#e4e4e4;white-space:nowrap;transform:scaleX(0.9300);transform-origin:0 0;">192 sf</div>
<div style="left:736.85px;top:824px;font-size:16px;line-height:16px;color:#e4e4e4;white-space:nowrap;transform:scaleX(0.9300);transform-origin:0 0;">192 sf</div>
<div style="left:898.86px;top:824px;font-size:16px;line-height:16px;color:#e4e4e4;white-space:nowrap;transform:scaleX(0.9300);transform-origin:0 0;">56'-0"</div>
<svg style="left:44px;top:850px;" width="16" height="14" viewBox="0 0 16 14"><path d="M3.5 4.5 L8 9 L12.5 4.5" stroke="#d0d0d0" stroke-width="1.2" fill="none"/></svg>
<div style="left:181px;top:852px;width:12px;height:12px;background:#ee1111;"></div>
<div style="left:735.14px;top:851px;font-size:16px;line-height:16px;font-weight:bold;color:#f2f2f2;white-space:nowrap;transform:scaleX(0.9300);transform-origin:0 0;">204 sf</div>
<div style="left:888.14px;top:851px;font-size:16px;line-height:16px;font-weight:bold;color:#f2f2f2;white-space:nowrap;transform:scaleX(0.9300);transform-origin:0 0;">62'-10"</div>
<svg style="left:78px;top:872px;" width="24" height="24" viewBox="0 0 24 24"><path d="M2.5 3 H19 M2.5 3 V22" stroke="#6c66b6" stroke-width="1.2" stroke-dasharray="1.5 1.5"/><path d="M6.5 21.5 V13.5 L12 7.5 H20.5 V21.5 Z" stroke="#f0f0f0" stroke-width="1.4" fill="none"/></svg>
<div style="left:104.00px;top:876px;font-size:16px;line-height:16px;color:#e4e4e4;white-space:nowrap;transform:scaleX(0.9300);transform-origin:0 0;">Area A</div>
<div style="left:313.30px;top:876px;font-size:16px;line-height:16px;color:#e4e4e4;white-space:nowrap;transform:scaleX(0.9110);transform-origin:0 0;">Brighter Graphics</div>
<div style="left:443.30px;top:876px;font-size:16px;line-height:16px;color:#e4e4e4;white-space:nowrap;transform:scaleX(0.9296);transform-origin:0 0;">8/17/2025 ...</div>
<div style="left:562px;top:878px;width:12px;height:12px;background:#ee1111;"></div>
<div style="left:607.00px;top:876px;font-size:16px;line-height:16px;color:#e4e4e4;white-space:nowrap;transform:scaleX(0.9300);transform-origin:0 0;">204 sf</div>
<div style="left:736.85px;top:876px;font-size:16px;line-height:16px;color:#e4e4e4;white-space:nowrap;transform:scaleX(0.9300);transform-origin:0 0;">204 sf</div>
<div style="left:890.60px;top:876px;font-size:16px;line-height:16px;color:#e4e4e4;white-space:nowrap;transform:scaleX(0.9300);transform-origin:0 0;">62'-10"</div>
<div style="left:1.30px;top:994px;font-size:16px;line-height:16px;color:#ececec;white-space:nowrap;transform:scaleX(0.9026);transform-origin:0 0;">Prêt</div>
<div style="left:1290px;top:985px;width:36px;height:35px;background:#1b5a8c;"></div>
<div style="left:1398px;top:985px;width:37px;height:35px;background:#1b5a8c;"></div>
<svg style="left:1220px;top:985px;" width="240" height="35" viewBox="0 0 240 35"><path d="M9.2 8 V25 M15.8 8 V25 M22.3 8 V25 M7 10.2 H24.5 M7 16.8 H24.5 M7 23.4 H24.5" stroke="#f0f0f0" stroke-width="1.5"/><path d="M45.2 8 V25 M51.8 8 V17 M58.3 8 V14 M43 10.2 H60.5 M43 16.8 H51 M43 23.4 H48" stroke="#f0f0f0" stroke-width="1.5"/><path d="M52 15.5 H56 A4.2 4.2 0 0 1 56 23.9 H52" stroke="#f0f0f0" stroke-width="1.9" fill="none"/><path d="M52 18.1 H56 A1.6 1.6 0 0 1 56 21.3 H52" stroke="#f0f0f0" stroke-width="1.1" fill="none"/><path d="M94 13 V12.5 L89.5 8.5 H81.5 V25.5 H86 M89.5 8.5 V13 H94" stroke="#c9ecff" stroke-width="1.5" fill="none"/><path d="M88 15.5 H92 A4.2 4.2 0 0 1 92 23.9 H88" stroke="#c9ecff" stroke-width="1.9" fill="none"/><path d="M88 18.1 H92 A1.6 1.6 0 0 1 92 21.3 H88" stroke="#c9ecff" stroke-width="1.1" fill="none"/><path d="M117 22 L126 10 L131.5 14 L129 17 M118.5 24.5 L115.5 22.5 L117.5 20 L120 21.5 Z" stroke="#f0f0f0" stroke-width="1.5" fill="none"/><path d="M124 16 H128 A4.2 4.2 0 0 1 128 24.4 H124" stroke="#f0f0f0" stroke-width="1.9" fill="none"/><path d="M124 18.6 H128 A1.6 1.6 0 0 1 128 21.8 H124" stroke="#f0f0f0" stroke-width="1.1" fill="none"/><path d="M153 22 L162 9 L168 13.5 L166 16 M154.5 24.5 L151.5 22.5 L153.5 20 L156 21.5 Z" stroke="#f0f0f0" stroke-width="1.5" fill="none"/><path d="M168.5 19 A4.5 4.5 0 1 1 161 18 M161 18 L160.5 21" stroke="#2f86e0" stroke-width="1.8" fill="none"/><rect x="187.5" y="8.5" width="17" height="17" stroke="#c9ecff" stroke-width="1.5" fill="none"/><path d="M187.5 11.5 H204.5 M190 16 H202 L199 13.5 M202 21 H190 L193 23.5" stroke="#c9ecff" stroke-width="1.5" fill="none"/><path d="M217.5 15.5 L221.5 19.5 L225.5 15.5" stroke="#cfcfcf" stroke-width="1.2" fill="none"/></svg>
<div style="left:1480.30px;top:994.6px;font-size:16px;line-height:16px;color:#e8e8e8;white-space:nowrap;transform:scaleX(0.8986);transform-origin:0 0;">3.75 en = 18.288 m</div>
<div style="left:1637.20px;top:994.6px;font-size:16px;line-height:16px;color:#e8e8e8;white-space:nowrap;transform:scaleX(0.8986);transform-origin:0 0;">42.00 x 30.00 in</div>
<div style="left:1798.40px;top:994.6px;font-size:16px;line-height:16px;color:#e8e8e8;white-space:nowrap;transform:scaleX(0.8805);transform-origin:0 0;">(-2.15, 20.51)</div>
<svg style="left:648px;top:105px" width="1176" height="497" viewBox="648 105 1176 497"><path d="M726 105 V602" stroke="#3a3a3a" stroke-width="1.6"/><path d="M719.5 176 H726" stroke="#333" stroke-width="1"/><text x="719" y="173" font-size="6" fill="#333" text-anchor="middle">J</text><path d="M719.5 254 H726" stroke="#333" stroke-width="1"/><text x="719" y="251" font-size="6" fill="#333" text-anchor="middle">H</text><path d="M719.5 331 H726" stroke="#333" stroke-width="1"/><text x="719" y="328" font-size="6" fill="#333" text-anchor="middle">G</text><path d="M719.5 414 H726" stroke="#333" stroke-width="1"/><text x="719" y="411" font-size="6" fill="#333" text-anchor="middle">F</text><path d="M719.5 492 H726" stroke="#333" stroke-width="1"/><text x="719" y="489" font-size="6" fill="#333" text-anchor="middle">E</text><path d="M719.5 571.5 H726" stroke="#333" stroke-width="1"/><text x="719" y="568.5" font-size="6" fill="#333" text-anchor="middle">D</text><rect x="722" y="105" width="34" height="33" fill="#c6c6c6"/><rect x="730" y="116" width="18" height="9" fill="none" stroke="#fff" stroke-width="1.3"/><path d="M734 116 V121 M738 116 V120 M742 116 V121" stroke="#fff" stroke-width="1"/><rect x="798" y="130" width="34" height="33" fill="#c6c6c6"/><rect x="806" y="141" width="18" height="9" fill="none" stroke="#fff" stroke-width="1.3"/><path d="M810 141 V146 M814 141 V145 M818 141 V146" stroke="#fff" stroke-width="1"/><path d="M815 105 V602" stroke="#2a2a2a" stroke-width="1.1" fill="none" stroke-dasharray="17 4 4 4"/><path d="M964.5 105 V602" stroke="#2a2a2a" stroke-width="1.1" fill="none" stroke-dasharray="17 4 4 4"/><path d="M1113.3 105 V602" stroke="#2a2a2a" stroke-width="1.1" fill="none" stroke-dasharray="17 4 4 4"/><path d="M1262.4 105 V602" stroke="#2a2a2a" stroke-width="1.1" fill="none" stroke-dasharray="17 4 4 4"/><path d="M1411.8 105 V602" stroke="#2a2a2a" stroke-width="1.1" fill="none" stroke-dasharray="17 4 4 4"/><path d="M1561 105 V602" stroke="#2a2a2a" stroke-width="1.1" fill="none" stroke-dasharray="17 4 4 4"/><path d="M1710.3 105 V602" stroke="#2a2a2a" stroke-width="1.1" fill="none" stroke-dasharray="17 4 4 4"/><path d="M751 246 H1823" stroke="#2a2a2a" stroke-width="1.1" fill="none" stroke-dasharray="17 4 4 4"/><circle cx="745.4" cy="246" r="5.2" fill="#fff" stroke="#222" stroke-width="1"/><text x="745.4" y="248" text-anchor="middle" font-size="5" fill="#222">B</text><path d="M812 243 H818 M812 249 H818" stroke="#222" stroke-width="1"/><path d="M961.5 243 H967.5 M961.5 249 H967.5" stroke="#222" stroke-width="1"/><path d="M1110.3 243 H1116.3 M1110.3 249 H1116.3" stroke="#222" stroke-width="1"/><path d="M1259.4 243 H1265.4 M1259.4 249 H1265.4" stroke="#222" stroke-width="1"/><path d="M1408.8 243 H1414.8 M1408.8 249 H1414.8" stroke="#222" stroke-width="1"/><path d="M1558 243 H1564 M1558 249 H1564" stroke="#222" stroke-width="1"/><path d="M1707.3 243 H1713.3 M1707.3 249 H1713.3" stroke="#222" stroke-width="1"/><path d="M751 395 H1823" stroke="#2a2a2a" stroke-width="1.1" fill="none" stroke-dasharray="17 4 4 4"/><circle cx="745.4" cy="395" r="5.2" fill="#fff" stroke="#222" stroke-width="1"/><text x="745.4" y="397" text-anchor="middle" font-size="5" fill="#222">C</text><path d="M812 392 H818 M812 398 H818" stroke="#222" stroke-width="1"/><path d="M961.5 392 H967.5 M961.5 398 H967.5" stroke="#222" stroke-width="1"/><path d="M1110.3 392 H1116.3 M1110.3 398 H1116.3" stroke="#222" stroke-width="1"/><path d="M1259.4 392 H1265.4 M1259.4 398 H1265.4" stroke="#222" stroke-width="1"/><path d="M1408.8 392 H1414.8 M1408.8 398 H1414.8" stroke="#222" stroke-width="1"/><path d="M1558 392 H1564 M1558 398 H1564" stroke="#222" stroke-width="1"/><path d="M1707.3 392 H1713.3 M1707.3 398 H1713.3" stroke="#222" stroke-width="1"/><path d="M751 544.5 H1823" stroke="#2a2a2a" stroke-width="1.1" fill="none" stroke-dasharray="17 4 4 4"/><circle cx="745.4" cy="544.5" r="5.2" fill="#fff" stroke="#222" stroke-width="1"/><text x="745.4" y="546.5" text-anchor="middle" font-size="5" fill="#222">D</text><path d="M812 541.5 H818 M812 547.5 H818" stroke="#222" stroke-width="1"/><path d="M961.5 541.5 H967.5 M961.5 547.5 H967.5" stroke="#222" stroke-width="1"/><path d="M1110.3 541.5 H1116.3 M1110.3 547.5 H1116.3" stroke="#222" stroke-width="1"/><path d="M1259.4 541.5 H1265.4 M1259.4 547.5 H1265.4" stroke="#222" stroke-width="1"/><path d="M1408.8 541.5 H1414.8 M1408.8 547.5 H1414.8" stroke="#222" stroke-width="1"/><path d="M1558 541.5 H1564 M1558 547.5 H1564" stroke="#222" stroke-width="1"/><path d="M1707.3 541.5 H1713.3 M1707.3 547.5 H1713.3" stroke="#222" stroke-width="1"/><path d="M803.5 105 V556.5 H1823" stroke="#1a1a1a" stroke-width="3.2" fill="none"/><text x="892.4" y="149.7" text-anchor="middle" font-size="7.5" font-weight="bold" fill="#000" textLength="53" lengthAdjust="spacingAndGlyphs">OPEN OFFICE  200</text><path d="M803 221 L889 215 Q897 214.5 897 222 V252" stroke="#2e2e2e" stroke-width="3" fill="none" class="w"/><path d="M803 221 L889 215 Q897 214.5 897 222 V252" stroke="#fff" stroke-width="0.9" stroke-dasharray="1.6 1.4" fill="none" class="w"/><path d="M889 215 L990 206" stroke="#222" stroke-width="1.1" fill="none"/><path d="M1089 198 L1138 194" stroke="#333" stroke-width="1" fill="none" stroke-dasharray="2 1.6"/><path d="M989.4 105 V197 Q989.4 205 998 204 L1081 198.5 Q1089.4 197.5 1089.4 190 V105" stroke="#2e2e2e" stroke-width="3" fill="none" class="w"/><path d="M989.4 105 V197 Q989.4 205 998 204 L1081 198.5 Q1089.4 197.5 1089.4 190 V105" stroke="#fff" stroke-width="0.9" stroke-dasharray="1.6 1.4" fill="none" class="w"/><path d="M989.4 139 H1089.4 M1039 105 V201" stroke="#333" stroke-width="2.8" fill="none" class="w"/><path d="M989.4 139 H1089.4 M1039 105 V201" stroke="#fff" stroke-width="0.9" stroke-dasharray="1.6 1.4" fill="none" class="w"/><path d="M989.4 121.0 A15.5 15.5 0 0 1 1004.9 136.0 M1004.9 142.0 A15.5 15.5 0 0 1 989.4 157.0" stroke="#222" stroke-width="1.1" fill="none"/><path d="M989.4 139.0 H1004.9" stroke="#2a2a2a" stroke-width="6"/><path d="M989.4 139.0 H1004.9" stroke="#888" stroke-width="1.2" stroke-dasharray="1.5 1.5"/><circle cx="989.4" cy="129.0" r="4.3" fill="#fff" stroke="#333" stroke-width="0.9"/><circle cx="989.4" cy="149.0" r="4.3" fill="#fff" stroke="#333" stroke-width="0.9"/><path d="M1089.4 121.0 A15.5 15.5 0 0 0 1073.9 136.0 M1073.9 142.0 A15.5 15.5 0 0 0 1089.4 157.0" stroke="#222" stroke-width="1.1" fill="none"/><path d="M1089.4 139.0 H1073.9" stroke="#2a2a2a" stroke-width="6"/><path d="M1089.4 139.0 H1073.9" stroke="#888" stroke-width="1.2" stroke-dasharray="1.5 1.5"/><circle cx="1089.4" cy="129.0" r="4.3" fill="#fff" stroke="#333" stroke-width="0.9"/><circle cx="1089.4" cy="149.0" r="4.3" fill="#fff" stroke="#333" stroke-width="0.9"/><text x="1015" y="112.2" text-anchor="middle" font-size="7.5" font-weight="bold" fill="#000" textLength="36" lengthAdjust="spacingAndGlyphs">MEETING  201</text><text x="1064" y="112.2" text-anchor="middle" font-size="7.5" font-weight="bold" fill="#000" textLength="36" lengthAdjust="spacingAndGlyphs">MEETING  203</text><text x="1015" y="172.2" text-anchor="middle" font-size="7.5" font-weight="bold" fill="#000" textLength="36" lengthAdjust="spacingAndGlyphs">MEETING  202</text><text x="1064" y="172.2" text-anchor="middle" font-size="7.5" font-weight="bold" fill="#000" textLength="36" lengthAdjust="spacingAndGlyphs">MEETING  204</text><path d="M1138.6 105 V186 Q1138.6 194 1147 193 L1238 186.5 V105" stroke="#2e2e2e" stroke-width="3" fill="none" class="w"/><path d="M1138.6 105 V186 Q1138.6 194 1147 193 L1238 186.5 V105" stroke="#fff" stroke-width="0.9" stroke-dasharray="1.6 1.4" fill="none" class="w"/><path d="M1138.6 139 H1238" stroke="#333" stroke-width="2.8" fill="none" class="w"/><path d="M1138.6 139 H1238" stroke="#fff" stroke-width="0.9" stroke-dasharray="1.6 1.4" fill="none" class="w"/><path d="M1138.6 121.0 A15.5 15.5 0 0 1 1154.1 136.0 M1154.1 142.0 A15.5 15.5 0 0 1 1138.6 157.0" stroke="#222" stroke-width="1.1" fill="none"/><path d="M1138.6 139.0 H1154.1" stroke="#2a2a2a" stroke-width="6"/><path d="M1138.6 139.0 H1154.1" stroke="#888" stroke-width="1.2" stroke-dasharray="1.5 1.5"/><circle cx="1138.6" cy="129.0" r="4.3" fill="#fff" stroke="#333" stroke-width="0.9"/><circle cx="1138.6" cy="149.0" r="4.3" fill="#fff" stroke="#333" stroke-width="0.9"/><text x="1189.5" y="114.0" text-anchor="middle" font-size="7.5" font-weight="bold" fill="#000" textLength="35" lengthAdjust="spacingAndGlyphs">OFFICE  205</text><text x="1189.5" y="168.4" text-anchor="middle" font-size="7.5" font-weight="bold" fill="#000" textLength="35" lengthAdjust="spacingAndGlyphs">OFFICE  206</text><path d="M1238 186 L1411 174.5" stroke="#2e2e2e" stroke-width="3" fill="none" class="w"/><path d="M1238 186 L1411 174.5" stroke="#fff" stroke-width="0.9" stroke-dasharray="1.6 1.4" fill="none" class="w"/><path d="M1240 166 V180 M1240 166 A14 14 0 0 1 1254 180" stroke="#222" stroke-width="1.1" fill="none"/><circle cx="1246" cy="182" r="4.5" fill="#fff" stroke="#333" stroke-width="0.9"/><rect x="1262.8" y="108.4" width="124.5" height="49.8" stroke="#222" stroke-width="1.4" fill="none"/><path d="M1264 113 H1386 M1264 153.6 H1386" stroke="#333" stroke-width="1" fill="none" stroke-dasharray="2 1.6"/><text x="1329.2" y="136.8" text-anchor="middle" font-size="7.5" font-weight="bold" fill="#000" textLength="54" lengthAdjust="spacingAndGlyphs">CONFERENCE  207</text><path d="M1411.7 105 V176 M1486.4 105 V143 M1560.5 105 V176 M1635.2 105 V179 M1734.9 105 V187" stroke="#333" stroke-width="2.8" fill="none" class="w"/><path d="M1411.7 105 V176 M1486.4 105 V143 M1560.5 105 V176 M1635.2 105 V179 M1734.9 105 V187" stroke="#fff" stroke-width="0.9" stroke-dasharray="1.6 1.4" fill="none" class="w"/><path d="M1424 105 V126 H1473.6 V105" stroke="#333" stroke-width="1.2" fill="none" stroke-dasharray="3.5 2"/><rect x="1499.5" y="104" width="49.7" height="22.3" fill="#73b3f3" stroke="#1f5fd0" stroke-width="1" stroke-dasharray="2 1"/><text x="1524.3" y="119.2" text-anchor="middle" font-size="6" font-weight="bold" fill="#b03a8a" textLength="14" lengthAdjust="spacingAndGlyphs">198 sf</text><text x="1449" y="138.3" text-anchor="middle" font-size="7.5" font-weight="bold" fill="#000" textLength="36" lengthAdjust="spacingAndGlyphs">MEETING  208</text><text x="1524" y="138.3" text-anchor="middle" font-size="7.5" font-weight="bold" fill="#000" textLength="36" lengthAdjust="spacingAndGlyphs">MEETING  209</text><path d="M1411.7 174.5 H1440 Q1486 118 1532 171 H1560.5" stroke="#2e2e2e" stroke-width="3" fill="none" class="w"/><path d="M1411.7 174.5 H1440 Q1486 118 1532 171 H1560.5" stroke="#fff" stroke-width="0.9" stroke-dasharray="1.6 1.4" fill="none" class="w"/><path d="M1461 172 H1512 Q1486.5 198 1461 172 Z" stroke="#222" stroke-width="1.1" fill="none"/><text x="1488" y="207.7" text-anchor="middle" font-size="7.5" font-weight="bold" fill="#000" textLength="47" lengthAdjust="spacingAndGlyphs">RECEPTION  255</text><path d="M1388 158 V171 M1388 158 A14 14 0 0 1 1401 172" stroke="#222" stroke-width="1.1" fill="none"/><circle cx="1394.5" cy="173" r="4.5" fill="#fff" stroke="#333" stroke-width="0.9"/><path d="M1414 158.5 V171.5 M1414 158.5 A14 14 0 0 1 1427 172.5" stroke="#222" stroke-width="1.1" fill="none"/><circle cx="1422" cy="173.5" r="4.5" fill="#fff" stroke="#333" stroke-width="0.9"/><path d="M1558 158 V171 M1558 158 A14 14 0 0 0 1545 172" stroke="#222" stroke-width="1.1" fill="none"/><circle cx="1550" cy="173" r="4.5" fill="#fff" stroke="#333" stroke-width="0.9"/><path d="M1570 160.6 V173.6 M1570 160.6 A14 14 0 0 1 1583 174.6" stroke="#222" stroke-width="1.1" fill="none"/><circle cx="1577.2" cy="175.6" r="4.5" fill="#fff" stroke="#333" stroke-width="0.9"/><path d="M1638 165.8 V178.8 M1638 165.8 A14 14 0 0 1 1651 179.8" stroke="#222" stroke-width="1.1" fill="none"/><circle cx="1645.6" cy="180.8" r="4.5" fill="#fff" stroke="#333" stroke-width="0.9"/><path d="M1733 171 V184 M1733 171 A14 14 0 0 0 1720 185" stroke="#222" stroke-width="1.1" fill="none"/><circle cx="1724.3" cy="186" r="4.5" fill="#fff" stroke="#333" stroke-width="0.9"/><path d="M1585.5 105 V160.6 H1611 V105" stroke="#333" stroke-width="1.2" fill="none" stroke-dasharray="3.5 2"/><text x="1598.3" y="138.7" text-anchor="middle" font-size="7.5" font-weight="bold" fill="#000" textLength="36" lengthAdjust="spacingAndGlyphs">MEETING  210</text><rect x="1654.5" y="112.7" width="61" height="34.8" stroke="#333" stroke-width="1.2" fill="none" stroke-dasharray="3.5 2"/><text x="1686.5" y="131.7" text-anchor="middle" font-size="7.5" font-weight="bold" fill="#000" textLength="50" lengthAdjust="spacingAndGlyphs">CONFERENCE  211</text><path d="M1560.5 173.8 L1823 193" stroke="#2e2e2e" stroke-width="3" fill="none" class="w"/><path d="M1560.5 173.8 L1823 193" stroke="#fff" stroke-width="0.9" stroke-dasharray="1.6 1.4" fill="none" class="w"/><path d="M1734.9 139 H1823" stroke="#333" stroke-width="2.8" fill="none" class="w"/><path d="M1734.9 139 H1823" stroke="#fff" stroke-width="0.9" stroke-dasharray="1.6 1.4" fill="none" class="w"/><text x="1782.3" y="114.5" text-anchor="middle" font-size="7.5" font-weight="bold" fill="#000" textLength="35" lengthAdjust="spacingAndGlyphs">OFFICE  212</text><text x="1782.3" y="169.0" text-anchor="middle" font-size="7.5" font-weight="bold" fill="#000" textLength="35" lengthAdjust="spacingAndGlyphs">OFFICE  213</text><path d="M1823 128 A11 11 0 0 0 1812 139 A11 11 0 0 0 1823 150" stroke="#222" stroke-width="1.1" fill="none"/><path d="M803 271 H897" stroke="#2e2e2e" stroke-width="3" fill="none" class="w"/><path d="M803 271 H897" stroke="#fff" stroke-width="0.9" stroke-dasharray="1.6 1.4" fill="none" class="w"/><path d="M897 252.0 A15.5 15.5 0 0 0 881.5 267.0 M881.5 273.0 A15.5 15.5 0 0 0 897 288.0" stroke="#222" stroke-width="1.1" fill="none"/><path d="M897 270.0 H881.5" stroke="#2a2a2a" stroke-width="6"/><path d="M897 270.0 H881.5" stroke="#888" stroke-width="1.2" stroke-dasharray="1.5 1.5"/><circle cx="897" cy="260.0" r="4.3" fill="#fff" stroke="#333" stroke-width="0.9"/><circle cx="897" cy="280.0" r="4.3" fill="#fff" stroke="#333" stroke-width="0.9"/><path d="M897 290 V362" stroke="#333" stroke-width="2.8" fill="none" class="w"/><path d="M897 290 V362" stroke="#fff" stroke-width="0.9" stroke-dasharray="1.6 1.4" fill="none" class="w"/><text x="850.3" y="243.7" text-anchor="middle" font-size="7.5" font-weight="bold" fill="#000" textLength="40" lengthAdjust="spacingAndGlyphs">MEETING  247</text><rect x="833.3" y="281.8" width="39.3" height="75.5" fill="#78b6f3" stroke="#2d62c8" stroke-width="1" stroke-dasharray="2 1"/><text x="853" y="322.7" text-anchor="middle" font-size="7.5" font-weight="bold" fill="#0a1a3a" textLength="54" lengthAdjust="spacingAndGlyphs">CONFERENCE  246</text><text x="852" y="335.3" text-anchor="middle" font-size="6.5" font-weight="bold" fill="#c03060" textLength="17" lengthAdjust="spacingAndGlyphs">468 sf</text><path d="M803 370.3 H897" stroke="#2e2e2e" stroke-width="3" fill="none" class="w"/><path d="M803 370.3 H897" stroke="#fff" stroke-width="0.9" stroke-dasharray="1.6 1.4" fill="none" class="w"/><path d="M897 352.0 A15.5 15.5 0 0 0 881.5 367.0 M881.5 373.0 A15.5 15.5 0 0 0 897 388.0" stroke="#222" stroke-width="1.1" fill="none"/><path d="M897 370.0 H881.5" stroke="#2a2a2a" stroke-width="6"/><path d="M897 370.0 H881.5" stroke="#888" stroke-width="1.2" stroke-dasharray="1.5 1.5"/><circle cx="897" cy="360.0" r="4.3" fill="#fff" stroke="#333" stroke-width="0.9"/><circle cx="897" cy="380.0" r="4.3" fill="#fff" stroke="#333" stroke-width="0.9"/><path d="M897 390 V416 Q897 425 888 426 L803 420.4" stroke="#2e2e2e" stroke-width="3" fill="none" class="w"/><path d="M897 390 V416 Q897 425 888 426 L803 420.4" stroke="#fff" stroke-width="0.9" stroke-dasharray="1.6 1.4" fill="none" class="w"/><text x="850.8" y="402.5" text-anchor="middle" font-size="7.5" font-weight="bold" fill="#000" textLength="40" lengthAdjust="spacingAndGlyphs">MEETING  245</text><path d="M888 426 L1084 442.3" stroke="#222" stroke-width="1.1" fill="none"/><rect x="928" y="239" width="334" height="163" rx="10" stroke="#333" stroke-width="1" fill="none" stroke-dasharray="2 1.6"/><rect x="941.6" y="253" width="262.4" height="135.2" rx="5" stroke="#222" stroke-width="1.5" fill="none"/><text x="1051" y="321.3" text-anchor="middle" font-size="7.5" font-weight="bold" fill="#000" textLength="53" lengthAdjust="spacingAndGlyphs">OPEN OFFICE  248</text><path d="M1200 388 V262 Q1200 253 1209 253 H1248 Q1256.5 253 1256.5 262 V380 Q1256.5 388 1248 388 H1209 Q1200 388 1200 380" stroke="#2e2e2e" stroke-width="3" fill="none" class="w"/><path d="M1200 388 V262 Q1200 253 1209 253 H1248 Q1256.5 253 1256.5 262 V380 Q1256.5 388 1248 388 H1209 Q1200 388 1200 380" stroke="#fff" stroke-width="0.9" stroke-dasharray="1.6 1.4" fill="none" class="w"/><path d="M1200 320.6 H1256.5" stroke="#333" stroke-width="2.8" fill="none" class="w"/><path d="M1200 320.6 H1256.5" stroke="#fff" stroke-width="0.9" stroke-dasharray="1.6 1.4" fill="none" class="w"/><path d="M1200 302.0 A15.5 15.5 0 0 1 1215.5 317.0 M1215.5 323.0 A15.5 15.5 0 0 1 1200 338.0" stroke="#222" stroke-width="1.1" fill="none"/><path d="M1200 320.0 H1215.5" stroke="#2a2a2a" stroke-width="6"/><path d="M1200 320.0 H1215.5" stroke="#888" stroke-width="1.2" stroke-dasharray="1.5 1.5"/><circle cx="1200" cy="310.0" r="4.3" fill="#fff" stroke="#333" stroke-width="0.9"/><circle cx="1200" cy="330.0" r="4.3" fill="#fff" stroke="#333" stroke-width="0.9"/><text x="1230.6" y="289.0" text-anchor="middle" font-size="7.5" font-weight="bold" fill="#000" textLength="35" lengthAdjust="spacingAndGlyphs">OFFICE  249</text><text x="1230.6" y="363.5" text-anchor="middle" font-size="7.5" font-weight="bold" fill="#000" textLength="30" lengthAdjust="spacingAndGlyphs">COPY  250</text><path d="M1256 400 V234 Q1256 224 1266 224 H1282 Q1290 224 1290 232 V240 M1334 240 V229.5 L1449 238.8 Q1457.8 242 1457.8 252 V400 Q1457.8 415 1440 417 L1290 421 Q1256 421 1256 405" stroke="#2a2a2a" stroke-width="2.2" fill="none"/><path d="M1290 224 L1334 229.5" stroke="#333" stroke-width="1" fill="none" stroke-dasharray="2 1.6"/><path d="M1268 240.3 V400.8 H1417.4 V240.3 H1268" stroke="#1e1e1e" stroke-width="3" fill="none"/><path d="M1268 333.5 H1417.4 M1310 240.3 V400.8 M1396 240.3 V333.5 M1362 240.3 V292 H1310" stroke="#2a2a2a" stroke-width="2.2" fill="none"/><path d="M1397 243 L1412 330 M1412 243 L1397 330" stroke="#333" stroke-width="0.9"/><rect x="1424" y="256" width="30.4" height="40.39999999999998" stroke="#222" stroke-width="1.3" fill="none"/><path d="M1424 256 L1454.4 296.4 M1454.4 256 L1424 296.4" stroke="#333" stroke-width="0.9"/><rect x="1424" y="301" width="30.4" height="39.19999999999999" stroke="#222" stroke-width="1.3" fill="none"/><path d="M1424 301 L1454.4 340.2 M1454.4 301 L1424 340.2" stroke="#333" stroke-width="0.9"/><rect x="1424" y="362.7" width="30.4" height="21.30000000000001" stroke="#222" stroke-width="1.3" fill="none"/><path d="M1424 362.7 L1454.4 384 M1454.4 362.7 L1424 384" stroke="#333" stroke-width="0.9"/><path d="M1417.4 350 H1457.8" stroke="#333" stroke-width="2.8" fill="none" class="w"/><path d="M1417.4 350 H1457.8" stroke="#fff" stroke-width="0.9" stroke-dasharray="1.6 1.4" fill="none" class="w"/><path d="M1270 282.0 H1308" stroke="#222" stroke-width="1.6" stroke-dasharray="3 1.5"/><path d="M1270 287.5 H1308" stroke="#222" stroke-width="1.6" stroke-dasharray="3 1.5"/><path d="M1270 293.0 H1308" stroke="#222" stroke-width="1.6" stroke-dasharray="3 1.5"/><path d="M1270 298.5 H1308" stroke="#222" stroke-width="1.6" stroke-dasharray="3 1.5"/><path d="M1270 304.0 H1308" stroke="#222" stroke-width="1.6" stroke-dasharray="3 1.5"/><path d="M1270 309.5 H1308" stroke="#222" stroke-width="1.6" stroke-dasharray="3 1.5"/><path d="M1270 315.0 H1308" stroke="#222" stroke-width="1.6" stroke-dasharray="3 1.5"/><path d="M1270 320.5 H1308" stroke="#222" stroke-width="1.6" stroke-dasharray="3 1.5"/><path d="M1270 326.0 H1308" stroke="#222" stroke-width="1.6" stroke-dasharray="3 1.5"/><path d="M1289 282 V331" stroke="#222" stroke-width="1.5"/><path d="M1314 256 V290 M1326 256 V290 M1338 256 V290 M1350 256 V290" stroke="#333" stroke-width="0.9" stroke-dasharray="2 1.5"/><text x="1289" y="269.3" text-anchor="middle" font-size="7.5" font-weight="bold" fill="#000" textLength="30" lengthAdjust="spacingAndGlyphs">STAIR 251</text><text x="1337" y="264.7" text-anchor="middle" font-size="7.5" font-weight="bold" fill="#000" textLength="32" lengthAdjust="spacingAndGlyphs">ELECTRICAL</text><text x="1337" y="272.2" text-anchor="middle" font-size="7.5" font-weight="bold" fill="#000" textLength="10" lengthAdjust="spacingAndGlyphs">253</text><text x="1352" y="307.4" text-anchor="middle" font-size="7.5" font-weight="bold" fill="#000" textLength="44" lengthAdjust="spacingAndGlyphs">STORAGE 253A</text><text x="1335.4" y="325.4" text-anchor="middle" font-size="7.5" font-weight="bold" fill="#000" textLength="44" lengthAdjust="spacingAndGlyphs">STORAGE 254A</text><text x="1290.5" y="367.9" text-anchor="middle" font-size="8" font-weight="bold" fill="#000" textLength="44" lengthAdjust="spacingAndGlyphs" transform="rotate(-90 1290.5 365)">MOTHER'S RM  252</text><text x="1356.7" y="381.1" text-anchor="middle" font-size="7.5" font-weight="bold" fill="#000" textLength="44" lengthAdjust="spacingAndGlyphs">WOMEN'S RR  254</text><path d="M1340 340 V358 H1348 M1360 345 V360 M1372 345 V360 M1384 345 V360 M1340 388 H1400 M1346 385 H1356 V392 H1346 Z M1366 385 H1376 V392 H1366 Z" stroke="#222" stroke-width="1.4" fill="none"/><circle cx="1353" cy="343" r="2.5" fill="#555" stroke="#222" stroke-width="0.8"/><circle cx="1366" cy="343" r="2.5" fill="#555" stroke="#222" stroke-width="0.8"/><circle cx="1379" cy="343" r="2.5" fill="#555" stroke="#222" stroke-width="0.8"/><circle cx="1408" cy="343" r="2.5" fill="#555" stroke="#222" stroke-width="0.8"/><rect x="1273" y="368" width="10" height="18" stroke="#222" stroke-width="1" fill="none"/><rect x="1274" y="378" width="8" height="8" stroke="#222" stroke-width="1.4" fill="none"/><circle cx="1298" cy="240" r="4.3" fill="#fff" stroke="#333" stroke-width="0.9"/><circle cx="1323" cy="240" r="4.3" fill="#fff" stroke="#333" stroke-width="0.9"/><circle cx="1298" cy="401" r="4.3" fill="#fff" stroke="#333" stroke-width="0.9"/><circle cx="1323" cy="401" r="4.3" fill="#fff" stroke="#333" stroke-width="0.9"/><circle cx="1320" cy="369" r="4.3" fill="#fff" stroke="#333" stroke-width="0.9"/><circle cx="1395" cy="377" r="4.3" fill="#fff" stroke="#333" stroke-width="0.9"/><circle cx="1365" cy="251" r="4.3" fill="#fff" stroke="#333" stroke-width="0.9"/><path d="M1418 421 L1431 420 L1440 423" stroke="#222" stroke-width="1.1" fill="none"/><circle cx="1446" cy="423.3" r="9.5" fill="#fff" stroke="#222" stroke-width="1"/><path d="M1437 423.3 H1455" stroke="#222" stroke-width="0.8"/><text x="1488" y="311.7" text-anchor="middle" font-size="7.5" font-weight="bold" fill="#000" textLength="33" lengthAdjust="spacingAndGlyphs">LOBBY  256</text><path d="M1515 400 V252 Q1515 238 1530 237.5 L1640 229.5 M1640 241 V230 Q1640 223 1648 223 H1704 Q1714.3 223 1714.3 234 V404 Q1714.3 415.6 1704 415.6 H1648 Q1640 415.6 1640 408 V398 M1640 410 L1530 404 Q1515 404 1515 400" stroke="#2a2a2a" stroke-width="2.4" fill="none" class="w"/><path d="M1515 400 V252 Q1515 238 1530 237.5 L1640 229.5 M1640 241 V230 Q1640 223 1648 223 H1704 Q1714.3 223 1714.3 234 V404 Q1714.3 415.6 1704 415.6 H1648 Q1640 415.6 1640 408 V398 M1640 410 L1530 404 Q1515 404 1515 400" stroke="#fff" stroke-width="0.9" stroke-dasharray="1.6 1.4" fill="none" class="w"/><path d="M1645 226 L1700 225" stroke="#333" stroke-width="1" fill="none" stroke-dasharray="2 1.6"/><path d="M1555 241 V387.4 H1705 V241 H1555" stroke="#1e1e1e" stroke-width="3" fill="none"/><path d="M1555 334.7 H1663 M1663 241 V387.4 M1663 305 H1705 M1663 361.7 H1705 M1515 298 H1555 M1515 348 H1555" stroke="#2a2a2a" stroke-width="2.2" fill="none"/><rect x="1518.7" y="256.2" width="30.3" height="39.8" fill="#f2f25a" stroke="#333" stroke-width="1.2"/><path d="M1518.7 256.2 L1549 296 M1549 256.2 L1518.7 296" stroke="#333" stroke-width="0.9"/><text x="1533.8" y="279.2" text-anchor="middle" font-size="6" font-weight="bold" fill="#d04a2a" textLength="14" lengthAdjust="spacingAndGlyphs">192 sf</text><rect x="1519.5" y="300.7" width="29.5" height="39.900000000000034" stroke="#222" stroke-width="1.3" fill="none"/><path d="M1519.5 300.7 L1549 340.6 M1549 300.7 L1519.5 340.6" stroke="#333" stroke-width="0.9"/><rect x="1519.5" y="362.8" width="29.5" height="20.0" stroke="#222" stroke-width="1.3" fill="none"/><path d="M1519.5 362.8 L1549 382.8 M1549 362.8 L1519.5 382.8" stroke="#333" stroke-width="0.9"/><rect x="1565.5" y="259.7" width="24.2" height="55.6" fill="#f3a9b0" stroke="#d02030" stroke-width="1.3"/><path d="M1573.5 260 V315 M1581.5 260 V315 M1566 273 H1589 M1566 287.5 H1589 M1566 302 H1589" stroke="#b02030" stroke-width="0.9"/><text x="1577.6" y="292.2" text-anchor="middle" font-size="6" font-weight="bold" fill="#c0304a" textLength="14" lengthAdjust="spacingAndGlyphs">204 sf</text><rect x="1595" y="259.7" width="23.6" height="55.6" stroke="#333" stroke-width="1" fill="none" stroke-dasharray="2 1.6"/><path d="M1603 260 V315 M1611 260 V315 M1595 273 H1618.6 M1595 287.5 H1618.6 M1595 302 H1618.6" stroke="#222" stroke-width="0.9"/><rect x="1625" y="259.7" width="23.6" height="55.6" stroke="#333" stroke-width="1" fill="none" stroke-dasharray="2 1.6"/><path d="M1633 260 V315 M1641 260 V315 M1625 273 H1648.6 M1625 287.5 H1648.6 M1625 302 H1648.6" stroke="#222" stroke-width="0.9"/><path d="M1667 310 H1701" stroke="#222" stroke-width="1.6" stroke-dasharray="3 1.5"/><path d="M1667 316 H1701" stroke="#222" stroke-width="1.6" stroke-dasharray="3 1.5"/><path d="M1667 322 H1701" stroke="#222" stroke-width="1.6" stroke-dasharray="3 1.5"/><path d="M1667 328 H1701" stroke="#222" stroke-width="1.6" stroke-dasharray="3 1.5"/><path d="M1667 334 H1701" stroke="#222" stroke-width="1.6" stroke-dasharray="3 1.5"/><path d="M1667 340 H1701" stroke="#222" stroke-width="1.6" stroke-dasharray="3 1.5"/><path d="M1667 346 H1701" stroke="#222" stroke-width="1.6" stroke-dasharray="3 1.5"/><path d="M1667 352 H1701" stroke="#222" stroke-width="1.6" stroke-dasharray="3 1.5"/><path d="M1684 310 V358" stroke="#222" stroke-width="1.5"/><text x="1594.8" y="250.7" text-anchor="middle" font-size="7.5" font-weight="bold" fill="#000" textLength="36" lengthAdjust="spacingAndGlyphs">SERVER  257</text><text x="1613.5" y="329.2" text-anchor="middle" font-size="7.5" font-weight="bold" fill="#000" textLength="44" lengthAdjust="spacingAndGlyphs">STORAGE 258A</text><text x="1683.8" y="277.7" text-anchor="middle" font-size="7.5" font-weight="bold" fill="#000" textLength="40" lengthAdjust="spacingAndGlyphs" transform="rotate(-90 1683.8 275)">STORAGE  260</text><text x="1616" y="380.3" text-anchor="middle" font-size="7.5" font-weight="bold" fill="#000" textLength="40" lengthAdjust="spacingAndGlyphs">MEN'S RR  258</text><text x="1683.8" y="381.2" text-anchor="middle" font-size="7.5" font-weight="bold" fill="#000" textLength="32" lengthAdjust="spacingAndGlyphs">STAIR  259</text><path d="M1582 340 V360 M1595 340 V356 M1605 342 H1625 V356 H1605 Z M1640 340 L1652 352 M1580 392 H1630 M1588 389 H1598 V396 H1588 Z M1608 389 H1618 V396 H1608 Z" stroke="#222" stroke-width="1.3" fill="none"/><circle cx="1563" cy="343" r="2.5" fill="#555" stroke="#222" stroke-width="0.8"/><circle cx="1590" cy="343" r="2.5" fill="#555" stroke="#222" stroke-width="0.8"/><circle cx="1652" cy="241" r="4.3" fill="#fff" stroke="#333" stroke-width="0.9"/><circle cx="1673" cy="241" r="4.3" fill="#fff" stroke="#333" stroke-width="0.9"/><circle cx="1652" cy="401" r="4.3" fill="#fff" stroke="#333" stroke-width="0.9"/><circle cx="1673" cy="401" r="4.3" fill="#fff" stroke="#333" stroke-width="0.9"/><circle cx="1577" cy="377" r="4.3" fill="#fff" stroke="#333" stroke-width="0.9"/><circle cx="1653" cy="369" r="4.3" fill="#fff" stroke="#333" stroke-width="0.9"/><path d="M1718 239.4 H1823 M1718 401.5 H1823" stroke="#333" stroke-width="1" fill="none" stroke-dasharray="2 1.6"/><path d="M1718 253 H1823 M1718 388 H1823" stroke="#222" stroke-width="1.4"/><path d="M1718 388 V262 Q1718 254.4 1727 254.4 H1764 Q1772.9 254.4 1772.9 263 V378 Q1772.9 386.3 1764 386.3 H1727 Q1718 386.3 1718 378" stroke="#2e2e2e" stroke-width="3" fill="none" class="w"/><path d="M1718 388 V262 Q1718 254.4 1727 254.4 H1764 Q1772.9 254.4 1772.9 263 V378 Q1772.9 386.3 1764 386.3 H1727 Q1718 386.3 1718 378" stroke="#fff" stroke-width="0.9" stroke-dasharray="1.6 1.4" fill="none" class="w"/><path d="M1718 320.7 H1772.9" stroke="#333" stroke-width="2.8" fill="none" class="w"/><path d="M1718 320.7 H1772.9" stroke="#fff" stroke-width="0.9" stroke-dasharray="1.6 1.4" fill="none" class="w"/><path d="M1772.9 302.0 A15.5 15.5 0 0 0 1757.4 317.0 M1757.4 323.0 A15.5 15.5 0 0 0 1772.9 338.0" stroke="#222" stroke-width="1.1" fill="none"/><path d="M1772.9 320.0 H1757.4" stroke="#2a2a2a" stroke-width="6"/><path d="M1772.9 320.0 H1757.4" stroke="#888" stroke-width="1.2" stroke-dasharray="1.5 1.5"/><circle cx="1772.9" cy="310.0" r="4.3" fill="#fff" stroke="#333" stroke-width="0.9"/><circle cx="1772.9" cy="330.0" r="4.3" fill="#fff" stroke="#333" stroke-width="0.9"/><text x="1741.2" y="287.0" text-anchor="middle" font-size="7.5" font-weight="bold" fill="#000" textLength="35" lengthAdjust="spacingAndGlyphs">OFFICE  261</text><text x="1741.2" y="355.5" text-anchor="middle" font-size="7.5" font-weight="bold" fill="#000" textLength="30" lengthAdjust="spacingAndGlyphs">COPY  262</text><path d="M1088 442 L1138 446 M1238 453 L1287 458 M1387 465 L1411 466.5 M1686 458 L1735 453" stroke="#333" stroke-width="1" fill="none" stroke-dasharray="2 1.6"/><path d="M989.3 556.5 V444.5 Q989.3 437.5 996.3 437.0 L1081.5 442.5 Q1088.5 442 1088.5 449 V556.5" stroke="#2e2e2e" stroke-width="3" fill="none" class="w"/><path d="M989.3 556.5 V444.5 Q989.3 437.5 996.3 437.0 L1081.5 442.5 Q1088.5 442 1088.5 449 V556.5" stroke="#fff" stroke-width="0.9" stroke-dasharray="1.6 1.4" fill="none" class="w"/><path d="M989.3 493.8 H1088.5" stroke="#333" stroke-width="2.8" fill="none" class="w"/><path d="M989.3 493.8 H1088.5" stroke="#fff" stroke-width="0.9" stroke-dasharray="1.6 1.4" fill="none" class="w"/><path d="M1088.5 476.0 A15.5 15.5 0 0 0 1073.0 491.0 M1073.0 497.0 A15.5 15.5 0 0 0 1088.5 512.0" stroke="#222" stroke-width="1.1" fill="none"/><path d="M1088.5 494.0 H1073.0" stroke="#2a2a2a" stroke-width="6"/><path d="M1088.5 494.0 H1073.0" stroke="#888" stroke-width="1.2" stroke-dasharray="1.5 1.5"/><circle cx="1088.5" cy="484.0" r="4.3" fill="#fff" stroke="#333" stroke-width="0.9"/><circle cx="1088.5" cy="504.0" r="4.3" fill="#fff" stroke="#333" stroke-width="0.9"/><text x="890.3" y="491.6" text-anchor="middle" font-size="7.5" font-weight="bold" fill="#000" textLength="53" lengthAdjust="spacingAndGlyphs">OPEN OFFICE  244</text><text x="1038.7" y="468.7" text-anchor="middle" font-size="7.5" font-weight="bold" fill="#000" textLength="35" lengthAdjust="spacingAndGlyphs">OFFICE  242</text><text x="1038.7" y="522.3" text-anchor="middle" font-size="7.5" font-weight="bold" fill="#000" textLength="35" lengthAdjust="spacingAndGlyphs">OFFICE  243</text><path d="M1138 556.5 V455.5 Q1138 448.5 1145 448.0 L1231.3 453.5 Q1238.3 453 1238.3 460 V556.5" stroke="#2e2e2e" stroke-width="3" fill="none" class="w"/><path d="M1138 556.5 V455.5 Q1138 448.5 1145 448.0 L1231.3 453.5 Q1238.3 453 1238.3 460 V556.5" stroke="#fff" stroke-width="0.9" stroke-dasharray="1.6 1.4" fill="none" class="w"/><path d="M1138 503.6 H1238.3" stroke="#333" stroke-width="2.8" fill="none" class="w"/><path d="M1138 503.6 H1238.3" stroke="#fff" stroke-width="0.9" stroke-dasharray="1.6 1.4" fill="none" class="w"/><path d="M1188 450.75 V556.5" stroke="#333" stroke-width="2.8" fill="none" class="w"/><path d="M1188 450.75 V556.5" stroke="#fff" stroke-width="0.9" stroke-dasharray="1.6 1.4" fill="none" class="w"/><path d="M1138 485.0 A15.5 15.5 0 0 1 1153.5 500.0 M1153.5 506.0 A15.5 15.5 0 0 1 1138 521.0" stroke="#222" stroke-width="1.1" fill="none"/><path d="M1138 503.0 H1153.5" stroke="#2a2a2a" stroke-width="6"/><path d="M1138 503.0 H1153.5" stroke="#888" stroke-width="1.2" stroke-dasharray="1.5 1.5"/><circle cx="1138" cy="493.0" r="4.3" fill="#fff" stroke="#333" stroke-width="0.9"/><circle cx="1138" cy="513.0" r="4.3" fill="#fff" stroke="#333" stroke-width="0.9"/><path d="M1238.3 485.0 A15.5 15.5 0 0 0 1222.8 500.0 M1222.8 506.0 A15.5 15.5 0 0 0 1238.3 521.0" stroke="#222" stroke-width="1.1" fill="none"/><path d="M1238.3 503.0 H1222.8" stroke="#2a2a2a" stroke-width="6"/><path d="M1238.3 503.0 H1222.8" stroke="#888" stroke-width="1.2" stroke-dasharray="1.5 1.5"/><circle cx="1238.3" cy="493.0" r="4.3" fill="#fff" stroke="#333" stroke-width="0.9"/><circle cx="1238.3" cy="513.0" r="4.3" fill="#fff" stroke="#333" stroke-width="0.9"/><text x="1163" y="477.2" text-anchor="middle" font-size="7.5" font-weight="bold" fill="#000" textLength="34" lengthAdjust="spacingAndGlyphs">OFFICE  240</text><text x="1213" y="477.2" text-anchor="middle" font-size="7.5" font-weight="bold" fill="#000" textLength="34" lengthAdjust="spacingAndGlyphs">OFFICE  238</text><text x="1163" y="530.7" text-anchor="middle" font-size="7.5" font-weight="bold" fill="#000" textLength="34" lengthAdjust="spacingAndGlyphs">OFFICE  241</text><text x="1213" y="530.7" text-anchor="middle" font-size="7.5" font-weight="bold" fill="#000" textLength="34" lengthAdjust="spacingAndGlyphs">OFFICE  239</text><path d="M1287.5 556.5 V466.4 Q1287.5 459.4 1294.5 458.9 L1379.7 464.5 Q1386.7 464 1386.7 471 V556.5" stroke="#2e2e2e" stroke-width="3" fill="none" class="w"/><path d="M1287.5 556.5 V466.4 Q1287.5 459.4 1294.5 458.9 L1379.7 464.5 Q1386.7 464 1386.7 471 V556.5" stroke="#fff" stroke-width="0.9" stroke-dasharray="1.6 1.4" fill="none" class="w"/><path d="M1287.5 503.6 H1386.7" stroke="#333" stroke-width="2.8" fill="none" class="w"/><path d="M1287.5 503.6 H1386.7" stroke="#fff" stroke-width="0.9" stroke-dasharray="1.6 1.4" fill="none" class="w"/><path d="M1337.2 461.7 V556.5" stroke="#333" stroke-width="2.8" fill="none" class="w"/><path d="M1337.2 461.7 V556.5" stroke="#fff" stroke-width="0.9" stroke-dasharray="1.6 1.4" fill="none" class="w"/><path d="M1287.5 485.0 A15.5 15.5 0 0 1 1303.0 500.0 M1303.0 506.0 A15.5 15.5 0 0 1 1287.5 521.0" stroke="#222" stroke-width="1.1" fill="none"/><path d="M1287.5 503.0 H1303.0" stroke="#2a2a2a" stroke-width="6"/><path d="M1287.5 503.0 H1303.0" stroke="#888" stroke-width="1.2" stroke-dasharray="1.5 1.5"/><circle cx="1287.5" cy="493.0" r="4.3" fill="#fff" stroke="#333" stroke-width="0.9"/><circle cx="1287.5" cy="513.0" r="4.3" fill="#fff" stroke="#333" stroke-width="0.9"/><path d="M1386.7 485.0 A15.5 15.5 0 0 0 1371.2 500.0 M1371.2 506.0 A15.5 15.5 0 0 0 1386.7 521.0" stroke="#222" stroke-width="1.1" fill="none"/><path d="M1386.7 503.0 H1371.2" stroke="#2a2a2a" stroke-width="6"/><path d="M1386.7 503.0 H1371.2" stroke="#888" stroke-width="1.2" stroke-dasharray="1.5 1.5"/><circle cx="1386.7" cy="493.0" r="4.3" fill="#fff" stroke="#333" stroke-width="0.9"/><circle cx="1386.7" cy="513.0" r="4.3" fill="#fff" stroke="#333" stroke-width="0.9"/><text x="1313" y="484.7" text-anchor="middle" font-size="7.5" font-weight="bold" fill="#000" textLength="30" lengthAdjust="spacingAndGlyphs">OFFICE  236</text><text x="1362" y="484.7" text-anchor="middle" font-size="7.5" font-weight="bold" fill="#000" textLength="36" lengthAdjust="spacingAndGlyphs">MEETING  234</text><text x="1313" y="529.2" text-anchor="middle" font-size="7.5" font-weight="bold" fill="#000" textLength="30" lengthAdjust="spacingAndGlyphs">OFFICE  237</text><text x="1362" y="529.2" text-anchor="middle" font-size="7.5" font-weight="bold" fill="#000" textLength="36" lengthAdjust="spacingAndGlyphs">MEETING  235</text><rect x="1383.7" y="456.2" width="206.3" height="110.8" rx="6" stroke="#2a2a2a" stroke-width="1.5" fill="none" stroke-dasharray="6 3"/><path d="M1411.8 466.5 L1487 472.7 L1561 466.5 V489 H1411.8 Z" stroke="#222" stroke-width="1.4" fill="none"/><path d="M1411.8 474 H1561" stroke="#222" stroke-width="1.1" fill="none"/><rect x="1415" y="477" width="22" height="10" stroke="#222" stroke-width="1.1" fill="none"/><rect x="1536" y="477" width="22" height="10" stroke="#222" stroke-width="1.1" fill="none"/><rect x="1441" y="476" width="92" height="12" stroke="#222" stroke-width="1.1" fill="none"/><rect x="1480" y="480" width="14" height="6" stroke="#222" stroke-width="1.1" fill="none"/><rect x="1441" y="496" width="90.4" height="29" stroke="#333" stroke-width="1" fill="none" stroke-dasharray="2 1.6"/><rect x="1441" y="503.3" width="90.4" height="15.2" stroke="#222" stroke-width="1" fill="none"/><text x="1487" y="513.7" text-anchor="middle" font-size="7.5" font-weight="bold" fill="#000" textLength="52" lengthAdjust="spacingAndGlyphs">BREAK ROOM  233</text><rect x="1404.5" y="537.6" width="163.5" height="13.4" stroke="#222" stroke-width="1.3" fill="none"/><rect x="1405" y="538" width="12" height="12" stroke="#222" stroke-width="1.1" fill="none"/><rect x="1555" y="538" width="12" height="12" stroke="#222" stroke-width="1.1" fill="none"/><path d="M1585.7 556.5 V473 Q1585.7 466 1592.7 465.5 L1679 458.5 Q1686 458 1686 465 V556.5" stroke="#2e2e2e" stroke-width="3" fill="none" class="w"/><path d="M1585.7 556.5 V473 Q1585.7 466 1592.7 465.5 L1679 458.5 Q1686 458 1686 465 V556.5" stroke="#fff" stroke-width="0.9" stroke-dasharray="1.6 1.4" fill="none" class="w"/><path d="M1585.7 503.8 H1686" stroke="#333" stroke-width="2.8" fill="none" class="w"/><path d="M1585.7 503.8 H1686" stroke="#fff" stroke-width="0.9" stroke-dasharray="1.6 1.4" fill="none" class="w"/><path d="M1635.4 462.0 V556.5" stroke="#333" stroke-width="2.8" fill="none" class="w"/><path d="M1635.4 462.0 V556.5" stroke="#fff" stroke-width="0.9" stroke-dasharray="1.6 1.4" fill="none" class="w"/><path d="M1585.7 485.0 A15.5 15.5 0 0 1 1601.2 500.0 M1601.2 506.0 A15.5 15.5 0 0 1 1585.7 521.0" stroke="#222" stroke-width="1.1" fill="none"/><path d="M1585.7 503.0 H1601.2" stroke="#2a2a2a" stroke-width="6"/><path d="M1585.7 503.0 H1601.2" stroke="#888" stroke-width="1.2" stroke-dasharray="1.5 1.5"/><circle cx="1585.7" cy="493.0" r="4.3" fill="#fff" stroke="#333" stroke-width="0.9"/><circle cx="1585.7" cy="513.0" r="4.3" fill="#fff" stroke="#333" stroke-width="0.9"/><path d="M1686 485.0 A15.5 15.5 0 0 0 1670.5 500.0 M1670.5 506.0 A15.5 15.5 0 0 0 1686 521.0" stroke="#222" stroke-width="1.1" fill="none"/><path d="M1686 503.0 H1670.5" stroke="#2a2a2a" stroke-width="6"/><path d="M1686 503.0 H1670.5" stroke="#888" stroke-width="1.2" stroke-dasharray="1.5 1.5"/><circle cx="1686" cy="493.0" r="4.3" fill="#fff" stroke="#333" stroke-width="0.9"/><circle cx="1686" cy="513.0" r="4.3" fill="#fff" stroke="#333" stroke-width="0.9"/><text x="1612" y="486.2" text-anchor="middle" font-size="7.5" font-weight="bold" fill="#000" textLength="36" lengthAdjust="spacingAndGlyphs">MEETING  231</text><text x="1659" y="486.2" text-anchor="middle" font-size="7.5" font-weight="bold" fill="#000" textLength="34" lengthAdjust="spacingAndGlyphs">OFFICE  229</text><text x="1612" y="535.7" text-anchor="middle" font-size="7.5" font-weight="bold" fill="#000" textLength="36" lengthAdjust="spacingAndGlyphs">MEETING  232</text><text x="1659" y="535.7" text-anchor="middle" font-size="7.5" font-weight="bold" fill="#000" textLength="34" lengthAdjust="spacingAndGlyphs">OFFICE  230</text><path d="M1734.6 556.5 V462 Q1734.6 452 1744 451.5 L1823 445.5" stroke="#2e2e2e" stroke-width="3" fill="none" class="w"/><path d="M1734.6 556.5 V462 Q1734.6 452 1744 451.5 L1823 445.5" stroke="#fff" stroke-width="0.9" stroke-dasharray="1.6 1.4" fill="none" class="w"/><path d="M1734.6 503.8 H1823 M1784 449 V556.5" stroke="#333" stroke-width="2.8" fill="none" class="w"/><path d="M1734.6 503.8 H1823 M1784 449 V556.5" stroke="#fff" stroke-width="0.9" stroke-dasharray="1.6 1.4" fill="none" class="w"/><path d="M1734.6 485.0 A15.5 15.5 0 0 1 1750.1 500.0 M1750.1 506.0 A15.5 15.5 0 0 1 1734.6 521.0" stroke="#222" stroke-width="1.1" fill="none"/><path d="M1734.6 503.0 H1750.1" stroke="#2a2a2a" stroke-width="6"/><path d="M1734.6 503.0 H1750.1" stroke="#888" stroke-width="1.2" stroke-dasharray="1.5 1.5"/><circle cx="1734.6" cy="493.0" r="4.3" fill="#fff" stroke="#333" stroke-width="0.9"/><circle cx="1734.6" cy="513.0" r="4.3" fill="#fff" stroke="#333" stroke-width="0.9"/><text x="1760" y="477.7" text-anchor="middle" font-size="7.5" font-weight="bold" fill="#000" textLength="34" lengthAdjust="spacingAndGlyphs">OFFICE  227</text><text x="1758" y="532.7" text-anchor="middle" font-size="7.5" font-weight="bold" fill="#000" textLength="34" lengthAdjust="spacingAndGlyphs">OFFICE  228</text><text x="1808" y="477.7" text-anchor="middle" font-size="7.5" font-weight="bold" fill="#000" textLength="34" lengthAdjust="spacingAndGlyphs">OFFICE  2</text><text x="1808" y="532.7" text-anchor="middle" font-size="7.5" font-weight="bold" fill="#000" textLength="34" lengthAdjust="spacingAndGlyphs">OFFICE  2</text><path d="M1580 567 L1596 578" stroke="#222" stroke-width="1.1" fill="none"/><circle cx="1604.8" cy="585.6" r="9.8" fill="#fff" stroke="#222" stroke-width="1"/><path d="M1595 585.6 H1614.6" stroke="#222" stroke-width="0.8"/></svg>
</body></html>
